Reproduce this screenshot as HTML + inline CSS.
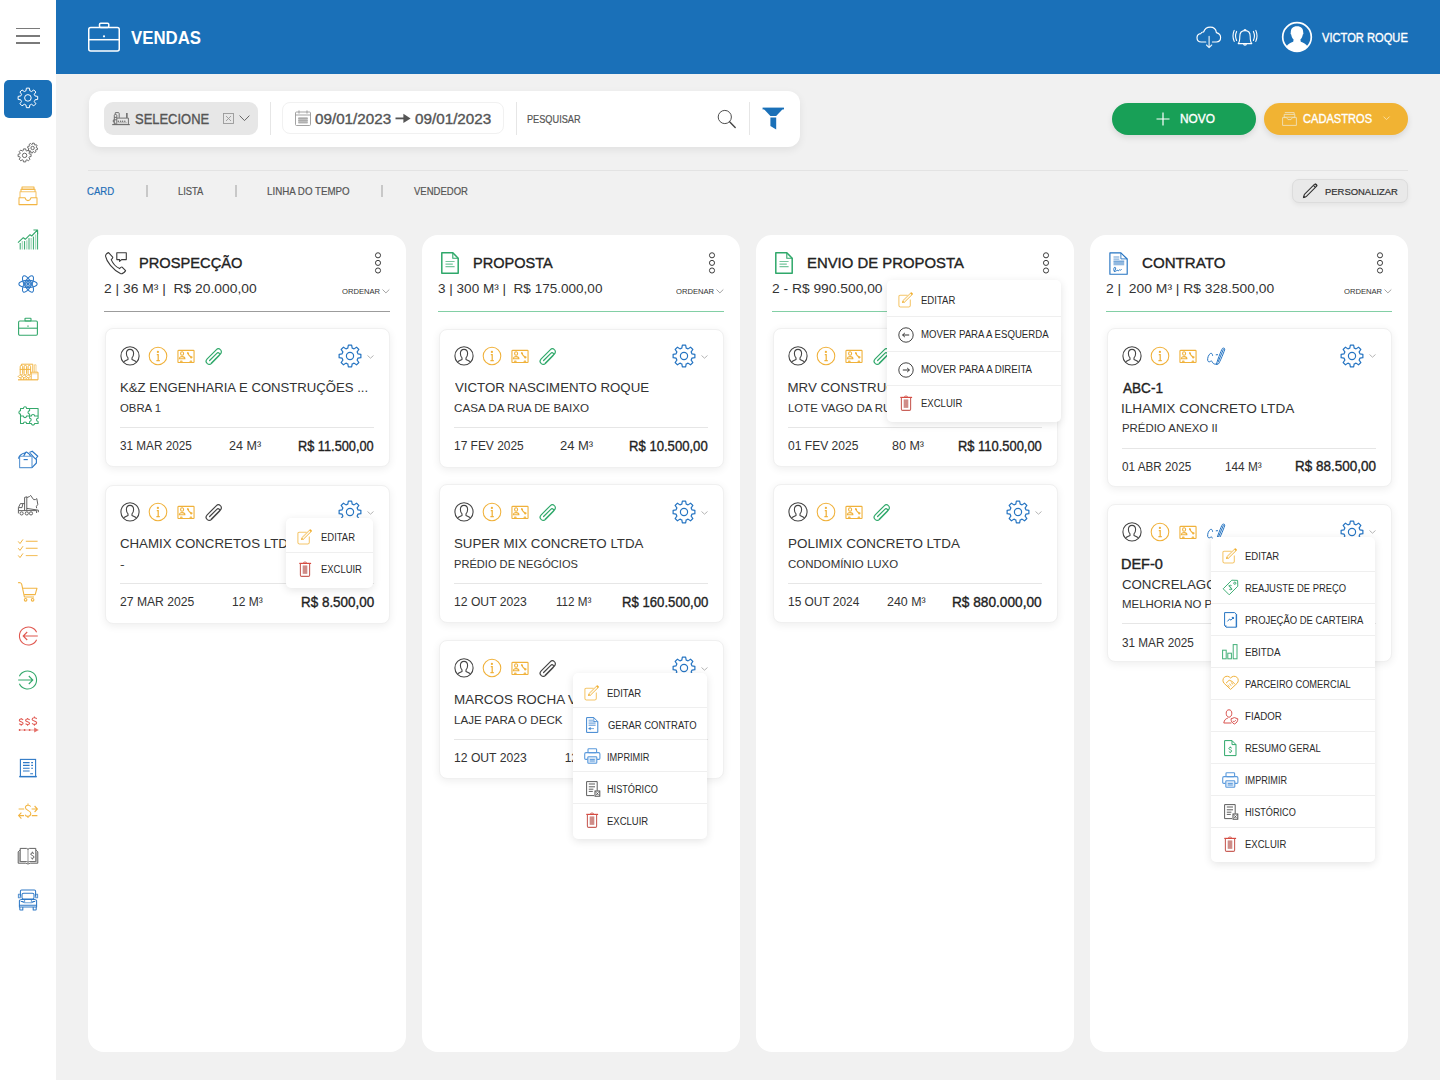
<!DOCTYPE html>
<html><head><meta charset="utf-8">
<style>
*{margin:0;padding:0;box-sizing:border-box}
html,body{width:1440px;height:1080px;overflow:hidden;background:#F1F1F1;font-family:"Liberation Sans",sans-serif}
.a{position:absolute}
.t{position:absolute;line-height:1;white-space:nowrap;transform-origin:0 0}
svg.a{overflow:visible}
</style></head><body>
<div class="a" style="left:0px;top:0px;width:56px;height:1080px;background:#fff;border-radius:0px;"></div>
<div class="a" style="left:16px;top:27.85px;width:24px;height:1.5px;background:#7a7a7a;border-radius:0px;"></div>
<div class="a" style="left:16px;top:35.15px;width:24px;height:1.5px;background:#7a7a7a;border-radius:0px;"></div>
<div class="a" style="left:16px;top:42.25px;width:24px;height:1.5px;background:#7a7a7a;border-radius:0px;"></div>
<div class="a" style="left:4px;top:80px;width:48px;height:38px;background:#1A70B8;border-radius:5px;"></div>
<svg class="a" style="left:16.1px;top:86.3px;" width="23.8" height="23.8" viewBox="0 0 23.8 23.8"><path d="M9.95,4.86 L10.42,2.11 L13.38,2.11 L13.85,4.86 L14.69,5.16 L15.50,5.55 L17.78,3.93 L19.87,6.02 L18.25,8.30 L18.64,9.11 L18.94,9.95 L21.69,10.42 L21.69,13.38 L18.94,13.85 L18.64,14.69 L18.25,15.50 L19.87,17.78 L17.78,19.87 L15.50,18.25 L14.69,18.64 L13.85,18.94 L13.38,21.69 L10.42,21.69 L9.95,18.94 L9.11,18.64 L8.30,18.25 L6.02,19.87 L3.93,17.78 L5.55,15.50 L5.16,14.69 L4.86,13.85 L2.11,13.38 L2.11,10.42 L4.86,9.95 L5.16,9.11 L5.55,8.30 L3.93,6.02 L6.02,3.93 L8.30,5.55 L9.11,5.16Z" fill="none" stroke="#fff" stroke-width="1.0" stroke-linejoin="round"/><circle cx="11.9" cy="11.9" r="3.3" fill="none" stroke="#fff" stroke-width="1.0"/></svg>
<div class="a" style="left:56px;top:0px;width:1384px;height:74px;background:#1A70B8;border-radius:0px;"></div>
<svg class="a" style="left:86px;top:21px;" width="36" height="32" viewBox="0 0 36 32"><g fill="none" stroke="#fff" stroke-width="1.5"><rect x="2.75" y="6.5" width="30.5" height="23.5" rx="2"/><rect x="13.5" y="2.2" width="9.3" height="4.3" rx="1.2"/><line x1="2.75" y1="18.7" x2="33.25" y2="18.7"/></g><circle cx="18" cy="15.3" r="1.1" fill="#fff"/></svg>
<span class="t" style="left:130.69px;top:28.54px;font-size:18.5px;color:#fff;font-weight:700;transform:scaleX(0.9074);">VENDAS</span>
<span class="t" style="left:1321.65px;top:31.63px;font-size:12.6px;color:#fff;font-weight:400;-webkit-text-stroke:0.35px #fff;transform:scaleX(0.8845);">VICTOR ROQUE</span>
<div class="a" style="left:88.5px;top:91px;width:711.5px;height:55.5px;background:#fff;border-radius:12px;box-shadow:0 3px 8px rgba(0,0,0,0.07)"></div>
<div class="a" style="left:104px;top:102px;width:154px;height:33px;background:#E7E7E7;border-radius:9px;"></div>
<span class="t" style="left:135.41px;top:111.90px;font-size:14.3px;color:#555;font-weight:400;-webkit-text-stroke:0.35px #555;transform:scaleX(0.9059);">SELECIONE</span>
<div class="a" style="left:269.5px;top:102px;width:1px;height:33px;background:#E6E6E6;border-radius:0px;"></div>
<div class="a" style="left:282.3px;top:102.3px;width:221.5px;height:32.1px;background:#fff;border-radius:8px;border:1px solid #F1F1F1"></div>
<span class="t" style="left:314.71px;top:112.15px;font-size:14px;color:#555;font-weight:400;-webkit-text-stroke:0.35px #555;transform:scaleX(1.0868);">09/01/2023</span>
<span class="t" style="left:414.90px;top:112.15px;font-size:14px;color:#555;font-weight:400;-webkit-text-stroke:0.35px #555;transform:scaleX(1.0883);">09/01/2023</span>
<div class="a" style="left:515.5px;top:102px;width:1px;height:33px;background:#E6E6E6;border-radius:0px;"></div>
<span class="t" style="left:527.25px;top:113.73px;font-size:10.6px;color:#555;font-weight:400;-webkit-text-stroke:0.2px #555;transform:scaleX(0.8666);">PESQUISAR</span>
<div class="a" style="left:748.5px;top:102px;width:1px;height:33px;background:#E6E6E6;border-radius:0px;"></div>
<div class="a" style="left:1111.6px;top:102.5px;width:144.4px;height:32px;background:#18A057;border-radius:16px;box-shadow:0 3px 6px rgba(0,0,0,0.10)"></div>
<span class="t" style="left:1180.03px;top:113.17px;font-size:12.2px;color:#fff;font-weight:400;-webkit-text-stroke:0.35px #fff;transform:scaleX(0.9736);">NOVO</span>
<div class="a" style="left:1264px;top:102.5px;width:143.8px;height:32px;background:#F1B333;border-radius:16px;box-shadow:0 3px 6px rgba(0,0,0,0.10)"></div>
<span class="t" style="left:1303.44px;top:113.17px;font-size:12.2px;color:#fff;font-weight:400;-webkit-text-stroke:0.35px #fff;transform:scaleX(0.9106);">CADASTROS</span>
<div class="a" style="left:88px;top:170px;width:1320px;height:1px;background:#E3E3E3;border-radius:0px;"></div>
<span class="t" style="left:87.31px;top:186.02px;font-size:11.2px;color:#1F6FB8;font-weight:400;-webkit-text-stroke:0.2px #1F6FB8;transform:scaleX(0.8563);">CARD</span>
<span class="t" style="left:178.23px;top:186.02px;font-size:11.2px;color:#555;font-weight:400;-webkit-text-stroke:0.2px #555;transform:scaleX(0.8389);">LISTA</span>
<span class="t" style="left:267.20px;top:186.02px;font-size:11.2px;color:#555;font-weight:400;-webkit-text-stroke:0.2px #555;transform:scaleX(0.8709);">LINHA DO TEMPO</span>
<span class="t" style="left:413.96px;top:186.02px;font-size:11.2px;color:#555;font-weight:400;-webkit-text-stroke:0.2px #555;transform:scaleX(0.8514);">VENDEDOR</span>
<div class="a" style="left:146.25px;top:185px;width:1.5px;height:12px;background:#C8C8C8;border-radius:0px;"></div>
<div class="a" style="left:235.25px;top:185px;width:1.5px;height:12px;background:#C8C8C8;border-radius:0px;"></div>
<div class="a" style="left:381.25px;top:185px;width:1.5px;height:12px;background:#C8C8C8;border-radius:0px;"></div>
<div class="a" style="left:1292px;top:179px;width:115.5px;height:23.5px;background:#E9E9E9;border-radius:7px;border:1px solid #DCDCDC;box-shadow:0 2px 5px rgba(0,0,0,0.06)"></div>
<span class="t" style="left:1325.23px;top:186.67px;font-size:9.6px;color:#333;font-weight:400;-webkit-text-stroke:0.2px #333;transform:scaleX(0.9839);">PERSONALIZAR</span>
<div class="a" style="left:88px;top:235px;width:318px;height:817px;background:#fff;border-radius:16px;"></div>
<div class="a" style="left:422px;top:235px;width:318px;height:817px;background:#fff;border-radius:16px;"></div>
<div class="a" style="left:756px;top:235px;width:318px;height:817px;background:#fff;border-radius:16px;"></div>
<div class="a" style="left:1090px;top:235px;width:318px;height:817px;background:#fff;border-radius:16px;"></div>
<svg class="a" style="left:104px;top:251px;" width="24" height="24" viewBox="0 0 24 24"><g fill="none" stroke="#3a3a3a" stroke-width="1.1" stroke-linejoin="round"><path d="M4.6,1.6 C3.3,1.9 1.3,3.6 1.6,5.4 C2.6,10.6 8.6,18.6 16.4,22.6 C18.2,23.3 20.6,21.3 21.6,19.6 L18.1,16.1 C17.4,15.6 16.4,16.6 15.6,17.6 C11.6,15.8 8.6,11.8 7.2,8.6 C8.1,7.8 9.2,7.0 8.7,6.2 Z"/><path d="M12.8,1.7 H22.3 V8.6 H17.6 L15.6,10.3 L15.6,8.6 H12.8 Z"/></g></svg>
<span class="t" style="left:139.30px;top:255.38px;font-size:15.5px;color:#222;font-weight:400;-webkit-text-stroke:0.35px #222;transform:scaleX(0.9453);">PROSPECÇÃO</span>
<span class="t" style="left:103.60px;top:281.64px;font-size:13.3px;color:#333;font-weight:400;transform:scaleX(1.0410);">2 | 36 M³ |&nbsp; R$ 20.000,00</span>
<span class="t" style="left:341.64px;top:288.03px;font-size:8.0px;color:#333;font-weight:400;transform:scaleX(0.9525);">ORDENAR</span>
<svg class="a" style="left:382px;top:289.2px;" width="8" height="5" viewBox="0 0 8 5"><path d="M0.5,0.5 L3.9,3.9 L7.3,0.5" fill="none" stroke="#999" stroke-width="0.9"/></svg>
<svg class="a" style="left:374px;top:251.6px;" width="8" height="23" viewBox="0 0 8 23"><circle cx="4" cy="3.3" r="2.55" fill="none" stroke="#333" stroke-width="0.95"/><circle cx="4" cy="10.899999999999999" r="2.55" fill="none" stroke="#333" stroke-width="0.95"/><circle cx="4" cy="18.5" r="2.55" fill="none" stroke="#333" stroke-width="0.95"/></svg>
<div class="a" style="left:104px;top:310.7px;width:286px;height:1.2px;background:#9c9c9c;border-radius:0px;"></div>
<svg class="a" style="left:441px;top:252px;" width="18" height="22" viewBox="0 0 18 22"><path d="M0.8,0.8 H11.8 L17.2,6.2 V21.2 H0.8 Z" fill="none" stroke="#2FA86A" stroke-width="1.5" stroke-linejoin="round"/><path d="M11.8,0.8 V6.2 H17.2" fill="none" stroke="#2FA86A" stroke-width="1.1"/><path d="M4.5,9.5 H13.6 M4.5,12.1 H11.8 M4.5,14.7 H13.6" stroke="#2FA86A" stroke-width="1.2" opacity="0.65"/></svg>
<span class="t" style="left:473.31px;top:255.38px;font-size:15.5px;color:#222;font-weight:400;-webkit-text-stroke:0.35px #222;transform:scaleX(0.9381);">PROPOSTA</span>
<span class="t" style="left:437.78px;top:281.64px;font-size:13.3px;color:#333;font-weight:400;transform:scaleX(1.0188);">3 | 300 M³ |&nbsp; R$ 175.000,00</span>
<span class="t" style="left:675.64px;top:288.03px;font-size:8.0px;color:#333;font-weight:400;transform:scaleX(0.9525);">ORDENAR</span>
<svg class="a" style="left:716px;top:289.2px;" width="8" height="5" viewBox="0 0 8 5"><path d="M0.5,0.5 L3.9,3.9 L7.3,0.5" fill="none" stroke="#999" stroke-width="0.9"/></svg>
<svg class="a" style="left:708px;top:251.6px;" width="8" height="23" viewBox="0 0 8 23"><circle cx="4" cy="3.3" r="2.55" fill="none" stroke="#333" stroke-width="0.95"/><circle cx="4" cy="10.899999999999999" r="2.55" fill="none" stroke="#333" stroke-width="0.95"/><circle cx="4" cy="18.5" r="2.55" fill="none" stroke="#333" stroke-width="0.95"/></svg>
<div class="a" style="left:438px;top:310.7px;width:286px;height:1.2px;background:#82CFA5;border-radius:0px;"></div>
<svg class="a" style="left:775px;top:252px;" width="18" height="22" viewBox="0 0 18 22"><path d="M0.8,0.8 H11.8 L17.2,6.2 V21.2 H0.8 Z" fill="none" stroke="#2FA86A" stroke-width="1.5" stroke-linejoin="round"/><path d="M11.8,0.8 V6.2 H17.2" fill="none" stroke="#2FA86A" stroke-width="1.1"/><path d="M4.5,9.5 H13.6 M4.5,12.1 H11.8 M4.5,14.7 H13.6" stroke="#2FA86A" stroke-width="1.2" opacity="0.65"/></svg>
<span class="t" style="left:807.28px;top:255.38px;font-size:15.5px;color:#222;font-weight:400;-webkit-text-stroke:0.35px #222;transform:scaleX(0.9602);">ENVIO DE PROPOSTA</span>
<span class="t" style="left:771.61px;top:281.64px;font-size:13.3px;color:#333;font-weight:400;transform:scaleX(1.0383);">2 - R$ 990.500,00</span>
<span class="t" style="left:1009.64px;top:288.03px;font-size:8.0px;color:#333;font-weight:400;transform:scaleX(0.9525);">ORDENAR</span>
<svg class="a" style="left:1050px;top:289.2px;" width="8" height="5" viewBox="0 0 8 5"><path d="M0.5,0.5 L3.9,3.9 L7.3,0.5" fill="none" stroke="#999" stroke-width="0.9"/></svg>
<svg class="a" style="left:1042px;top:251.6px;" width="8" height="23" viewBox="0 0 8 23"><circle cx="4" cy="3.3" r="2.55" fill="none" stroke="#333" stroke-width="0.95"/><circle cx="4" cy="10.899999999999999" r="2.55" fill="none" stroke="#333" stroke-width="0.95"/><circle cx="4" cy="18.5" r="2.55" fill="none" stroke="#333" stroke-width="0.95"/></svg>
<div class="a" style="left:772px;top:310.7px;width:286px;height:1.2px;background:#82CFA5;border-radius:0px;"></div>
<svg class="a" style="left:1108.5px;top:251.5px;" width="20" height="23" viewBox="0 0 20 23"><path d="M0.9,0.9 H11.9 L18.2,7.0 V22.2 H0.9 Z" fill="none" stroke="#2574C2" stroke-width="1.15" stroke-linejoin="round"/><path d="M11.9,0.9 V6.9 H18.2" fill="none" stroke="#2574C2" stroke-width="0.9"/><path d="M4.5,5 H10.3 M4.5,7.1 H10.3" stroke="#2574C2" stroke-width="0.95" opacity="0.75"/><rect x="4.5" y="8.6" width="10.7" height="4.7" fill="#2574C2" opacity="0.5"/><rect x="4.5" y="8.6" width="10.7" height="1.1" fill="#2574C2" opacity="0.35"/><path d="M5.2,19.4 C4.4,17.2 4.9,15 6.1,15.2 C7.3,15.5 6.6,18.8 5.1,19.4 C6,19.9 7.4,18.9 8.1,18.1 L9.3,18.9 L10.5,17.7 L11.5,18.3 L12.6,17.2" fill="none" stroke="#2574C2" stroke-width="0.95"/></svg>
<span class="t" style="left:1141.73px;top:255.38px;font-size:15.5px;color:#222;font-weight:400;-webkit-text-stroke:0.35px #222;transform:scaleX(0.9760);">CONTRATO</span>
<span class="t" style="left:1105.60px;top:281.64px;font-size:13.3px;color:#333;font-weight:400;transform:scaleX(1.0423);">2 |&nbsp; 200 M³ | R$ 328.500,00</span>
<span class="t" style="left:1343.64px;top:288.03px;font-size:8.0px;color:#333;font-weight:400;transform:scaleX(0.9525);">ORDENAR</span>
<svg class="a" style="left:1384px;top:289.2px;" width="8" height="5" viewBox="0 0 8 5"><path d="M0.5,0.5 L3.9,3.9 L7.3,0.5" fill="none" stroke="#999" stroke-width="0.9"/></svg>
<svg class="a" style="left:1376px;top:251.6px;" width="8" height="23" viewBox="0 0 8 23"><circle cx="4" cy="3.3" r="2.55" fill="none" stroke="#333" stroke-width="0.95"/><circle cx="4" cy="10.899999999999999" r="2.55" fill="none" stroke="#333" stroke-width="0.95"/><circle cx="4" cy="18.5" r="2.55" fill="none" stroke="#333" stroke-width="0.95"/></svg>
<div class="a" style="left:1106px;top:310.7px;width:286px;height:1.2px;background:#82CFA5;border-radius:0px;"></div>
<div class="a" style="left:104.5px;top:328.4px;width:285px;height:139px;background:#fff;border-radius:8px;box-shadow:0 2px 9px rgba(0,0,0,0.07);border:1px solid #F0F0F0"></div>
<svg class="a" style="left:119px;top:345.0px;" width="22" height="22" viewBox="0 0 22 22"><g fill="none" stroke="#454545" stroke-width="1.1"><circle cx="11" cy="10.9" r="9.1"/><path d="M4.6,17.0 C5.8,15.6 7.6,15.1 9.0,14.4 L9.0,12.9 C8.0,12.0 7.4,10.6 7.4,8.6 C7.4,5.9 8.8,4.4 11,4.4 C13.2,4.4 14.6,5.9 14.6,8.6 C14.6,10.6 14.0,12.0 13.0,12.9 L13.0,14.4 C14.4,15.1 16.2,15.6 17.4,17.0"/></g></svg>
<svg class="a" style="left:148px;top:346.0px;" width="20" height="20" viewBox="0 0 20 20"><circle cx="10" cy="10" r="8.8" fill="none" stroke="#F0B13A" stroke-width="1.05"/><circle cx="9.9" cy="5.9" r="1.15" fill="#F0B13A"/><path d="M8.8,8.7 H10.2 V14.6 M8.4,14.7 H11.8" fill="none" stroke="#F0B13A" stroke-width="1.25"/></svg>
<svg class="a" style="left:177px;top:349.0px;" width="18" height="15" viewBox="0 0 18 15"><g fill="none" stroke="#F0B13A" stroke-width="1.1" stroke-linejoin="round"><rect x="0.95" y="1.35" width="16.1" height="12.2" rx="0.6"/><ellipse cx="5.1" cy="4.5" rx="1.5" ry="1.75"/><path d="M2.3,9.8 C2.3,8.2 3.6,7.6 5.1,7.6 C6.6,7.6 7.9,8.2 7.9,9.8 Z"/><path d="M10.9,4.4 C11.6,6.2 12.8,7.6 14.4,8.4" stroke-width="1.2"/></g><ellipse cx="11" cy="4.3" rx="0.9" ry="1.3" transform="rotate(-30 11 4.3)" fill="#F0B13A"/><ellipse cx="14.4" cy="8.4" rx="1.3" ry="0.9" transform="rotate(-30 14.4 8.4)" fill="#F0B13A"/><path d="M2.6,13.6 L3.4,11.6 H5.2 L6,13.6 Z M12.2,13.6 L13,11.6 H14.8 L15.6,13.6 Z" fill="#F0B13A" opacity="0.85"/></svg>
<svg class="a" style="left:204.5px;top:347.8px;" width="18" height="17" viewBox="0 0 18 17"><path d="M6.2,15.2 L15.4,6.0 C16.7,4.7 16.7,2.7 15.4,1.6 C14.2,0.5 12.4,0.6 11.2,1.8 L2.2,10.8 C0.9,12.1 0.9,14.2 2.1,15.4 C3.4,16.6 5.3,16.6 6.6,15.3 L14.2,7.7 C14.9,7.0 14.9,5.9 14.2,5.2 C13.5,4.6 12.5,4.6 11.8,5.3 L4.6,12.5" fill="none" stroke="#2FA86A" stroke-width="1.2" stroke-linecap="round"/></svg>
<svg class="a" style="left:337px;top:343.0px;" width="26" height="26" viewBox="0 0 26 26"><path d="M10.81,5.10 L11.36,2.12 L14.64,2.12 L15.19,5.10 L16.14,5.42 L17.04,5.87 L19.53,4.15 L21.85,6.47 L20.13,8.96 L20.58,9.86 L20.90,10.81 L23.88,11.36 L23.88,14.64 L20.90,15.19 L20.58,16.14 L20.13,17.04 L21.85,19.53 L19.53,21.85 L17.04,20.13 L16.14,20.58 L15.19,20.90 L14.64,23.88 L11.36,23.88 L10.81,20.90 L9.86,20.58 L8.96,20.13 L6.47,21.85 L4.15,19.53 L5.87,17.04 L5.42,16.14 L5.10,15.19 L2.12,14.64 L2.12,11.36 L5.10,10.81 L5.42,9.86 L5.87,8.96 L4.15,6.47 L6.47,4.15 L8.96,5.87 L9.86,5.42Z" fill="none" stroke="#2574C2" stroke-width="1.2" stroke-linejoin="round"/><circle cx="13" cy="13" r="3.6" fill="none" stroke="#2574C2" stroke-width="1.2"/></svg>
<svg class="a" style="left:367px;top:354.5px;" width="7" height="4" viewBox="0 0 7 4"><path d="M0.5,0.5 L3.5,3.2 L6.5,0.5" fill="none" stroke="#b5b5b5" stroke-width="1"/></svg>
<span class="t" style="left:119.52px;top:381.24px;font-size:13.3px;color:#333;font-weight:400;transform:scaleX(0.9879);">K&amp;Z ENGENHARIA E CONSTRUÇÕES ...</span>
<span class="t" style="left:120.06px;top:402.57px;font-size:10.9px;color:#333;font-weight:400;transform:scaleX(1.0415);">OBRA 1</span>
<div class="a" style="left:120px;top:427.0px;width:254px;height:1px;background:#E6E6E6;border-radius:0px;"></div>
<span class="t" style="left:120.35px;top:440.24px;font-size:12px;color:#333;font-weight:400;transform:scaleX(0.9789);">31 MAR 2025</span>
<span class="t" style="left:228.97px;top:440.24px;font-size:12px;color:#333;font-weight:400;transform:scaleX(1.0452);">24 M³</span>
<span class="t" style="left:298.35px;top:438.73px;font-size:14.5px;color:#222;font-weight:400;-webkit-text-stroke:0.35px #222;transform:scaleX(0.8796);">R$ 11.500,00</span>
<div class="a" style="left:104.5px;top:484.5px;width:285px;height:139px;background:#fff;border-radius:8px;box-shadow:0 2px 9px rgba(0,0,0,0.07);border:1px solid #F0F0F0"></div>
<svg class="a" style="left:119px;top:501.1px;" width="22" height="22" viewBox="0 0 22 22"><g fill="none" stroke="#454545" stroke-width="1.1"><circle cx="11" cy="10.9" r="9.1"/><path d="M4.6,17.0 C5.8,15.6 7.6,15.1 9.0,14.4 L9.0,12.9 C8.0,12.0 7.4,10.6 7.4,8.6 C7.4,5.9 8.8,4.4 11,4.4 C13.2,4.4 14.6,5.9 14.6,8.6 C14.6,10.6 14.0,12.0 13.0,12.9 L13.0,14.4 C14.4,15.1 16.2,15.6 17.4,17.0"/></g></svg>
<svg class="a" style="left:148px;top:502.1px;" width="20" height="20" viewBox="0 0 20 20"><circle cx="10" cy="10" r="8.8" fill="none" stroke="#F0B13A" stroke-width="1.05"/><circle cx="9.9" cy="5.9" r="1.15" fill="#F0B13A"/><path d="M8.8,8.7 H10.2 V14.6 M8.4,14.7 H11.8" fill="none" stroke="#F0B13A" stroke-width="1.25"/></svg>
<svg class="a" style="left:177px;top:505.1px;" width="18" height="15" viewBox="0 0 18 15"><g fill="none" stroke="#F0B13A" stroke-width="1.1" stroke-linejoin="round"><rect x="0.95" y="1.35" width="16.1" height="12.2" rx="0.6"/><ellipse cx="5.1" cy="4.5" rx="1.5" ry="1.75"/><path d="M2.3,9.8 C2.3,8.2 3.6,7.6 5.1,7.6 C6.6,7.6 7.9,8.2 7.9,9.8 Z"/><path d="M10.9,4.4 C11.6,6.2 12.8,7.6 14.4,8.4" stroke-width="1.2"/></g><ellipse cx="11" cy="4.3" rx="0.9" ry="1.3" transform="rotate(-30 11 4.3)" fill="#F0B13A"/><ellipse cx="14.4" cy="8.4" rx="1.3" ry="0.9" transform="rotate(-30 14.4 8.4)" fill="#F0B13A"/><path d="M2.6,13.6 L3.4,11.6 H5.2 L6,13.6 Z M12.2,13.6 L13,11.6 H14.8 L15.6,13.6 Z" fill="#F0B13A" opacity="0.85"/></svg>
<svg class="a" style="left:204.5px;top:503.90000000000003px;" width="18" height="17" viewBox="0 0 18 17"><path d="M6.2,15.2 L15.4,6.0 C16.7,4.7 16.7,2.7 15.4,1.6 C14.2,0.5 12.4,0.6 11.2,1.8 L2.2,10.8 C0.9,12.1 0.9,14.2 2.1,15.4 C3.4,16.6 5.3,16.6 6.6,15.3 L14.2,7.7 C14.9,7.0 14.9,5.9 14.2,5.2 C13.5,4.6 12.5,4.6 11.8,5.3 L4.6,12.5" fill="none" stroke="#444" stroke-width="1.2" stroke-linecap="round"/></svg>
<svg class="a" style="left:337px;top:499.1px;" width="26" height="26" viewBox="0 0 26 26"><path d="M10.81,5.10 L11.36,2.12 L14.64,2.12 L15.19,5.10 L16.14,5.42 L17.04,5.87 L19.53,4.15 L21.85,6.47 L20.13,8.96 L20.58,9.86 L20.90,10.81 L23.88,11.36 L23.88,14.64 L20.90,15.19 L20.58,16.14 L20.13,17.04 L21.85,19.53 L19.53,21.85 L17.04,20.13 L16.14,20.58 L15.19,20.90 L14.64,23.88 L11.36,23.88 L10.81,20.90 L9.86,20.58 L8.96,20.13 L6.47,21.85 L4.15,19.53 L5.87,17.04 L5.42,16.14 L5.10,15.19 L2.12,14.64 L2.12,11.36 L5.10,10.81 L5.42,9.86 L5.87,8.96 L4.15,6.47 L6.47,4.15 L8.96,5.87 L9.86,5.42Z" fill="none" stroke="#2574C2" stroke-width="1.2" stroke-linejoin="round"/><circle cx="13" cy="13" r="3.6" fill="none" stroke="#2574C2" stroke-width="1.2"/></svg>
<svg class="a" style="left:367px;top:510.6px;" width="7" height="4" viewBox="0 0 7 4"><path d="M0.5,0.5 L3.5,3.2 L6.5,0.5" fill="none" stroke="#b5b5b5" stroke-width="1"/></svg>
<span class="t" style="left:119.92px;top:537.34px;font-size:13.3px;color:#333;font-weight:400;">CHAMIX CONCRETOS LTDA</span>
<span class="t" style="left:119.98px;top:558.67px;font-size:10.9px;color:#333;font-weight:400;transform:scaleX(1.2725);">-</span>
<div class="a" style="left:120px;top:583.1px;width:254px;height:1px;background:#E6E6E6;border-radius:0px;"></div>
<span class="t" style="left:120.19px;top:596.34px;font-size:12px;color:#333;font-weight:400;transform:scaleX(1.0127);">27 MAR 2025</span>
<span class="t" style="left:232.09px;top:596.34px;font-size:12px;color:#333;font-weight:400;">12 M³</span>
<span class="t" style="left:300.80px;top:594.83px;font-size:14.5px;color:#222;font-weight:400;-webkit-text-stroke:0.35px #222;transform:scaleX(0.9267);">R$ 8.500,00</span>
<div class="a" style="left:438.5px;top:328.6px;width:285px;height:139px;background:#fff;border-radius:8px;box-shadow:0 2px 9px rgba(0,0,0,0.07);border:1px solid #F0F0F0"></div>
<svg class="a" style="left:453px;top:345.20000000000005px;" width="22" height="22" viewBox="0 0 22 22"><g fill="none" stroke="#454545" stroke-width="1.1"><circle cx="11" cy="10.9" r="9.1"/><path d="M4.6,17.0 C5.8,15.6 7.6,15.1 9.0,14.4 L9.0,12.9 C8.0,12.0 7.4,10.6 7.4,8.6 C7.4,5.9 8.8,4.4 11,4.4 C13.2,4.4 14.6,5.9 14.6,8.6 C14.6,10.6 14.0,12.0 13.0,12.9 L13.0,14.4 C14.4,15.1 16.2,15.6 17.4,17.0"/></g></svg>
<svg class="a" style="left:482px;top:346.20000000000005px;" width="20" height="20" viewBox="0 0 20 20"><circle cx="10" cy="10" r="8.8" fill="none" stroke="#F0B13A" stroke-width="1.05"/><circle cx="9.9" cy="5.9" r="1.15" fill="#F0B13A"/><path d="M8.8,8.7 H10.2 V14.6 M8.4,14.7 H11.8" fill="none" stroke="#F0B13A" stroke-width="1.25"/></svg>
<svg class="a" style="left:511px;top:349.20000000000005px;" width="18" height="15" viewBox="0 0 18 15"><g fill="none" stroke="#F0B13A" stroke-width="1.1" stroke-linejoin="round"><rect x="0.95" y="1.35" width="16.1" height="12.2" rx="0.6"/><ellipse cx="5.1" cy="4.5" rx="1.5" ry="1.75"/><path d="M2.3,9.8 C2.3,8.2 3.6,7.6 5.1,7.6 C6.6,7.6 7.9,8.2 7.9,9.8 Z"/><path d="M10.9,4.4 C11.6,6.2 12.8,7.6 14.4,8.4" stroke-width="1.2"/></g><ellipse cx="11" cy="4.3" rx="0.9" ry="1.3" transform="rotate(-30 11 4.3)" fill="#F0B13A"/><ellipse cx="14.4" cy="8.4" rx="1.3" ry="0.9" transform="rotate(-30 14.4 8.4)" fill="#F0B13A"/><path d="M2.6,13.6 L3.4,11.6 H5.2 L6,13.6 Z M12.2,13.6 L13,11.6 H14.8 L15.6,13.6 Z" fill="#F0B13A" opacity="0.85"/></svg>
<svg class="a" style="left:538.5px;top:348.00000000000006px;" width="18" height="17" viewBox="0 0 18 17"><path d="M6.2,15.2 L15.4,6.0 C16.7,4.7 16.7,2.7 15.4,1.6 C14.2,0.5 12.4,0.6 11.2,1.8 L2.2,10.8 C0.9,12.1 0.9,14.2 2.1,15.4 C3.4,16.6 5.3,16.6 6.6,15.3 L14.2,7.7 C14.9,7.0 14.9,5.9 14.2,5.2 C13.5,4.6 12.5,4.6 11.8,5.3 L4.6,12.5" fill="none" stroke="#2FA86A" stroke-width="1.2" stroke-linecap="round"/></svg>
<svg class="a" style="left:671px;top:343.20000000000005px;" width="26" height="26" viewBox="0 0 26 26"><path d="M10.81,5.10 L11.36,2.12 L14.64,2.12 L15.19,5.10 L16.14,5.42 L17.04,5.87 L19.53,4.15 L21.85,6.47 L20.13,8.96 L20.58,9.86 L20.90,10.81 L23.88,11.36 L23.88,14.64 L20.90,15.19 L20.58,16.14 L20.13,17.04 L21.85,19.53 L19.53,21.85 L17.04,20.13 L16.14,20.58 L15.19,20.90 L14.64,23.88 L11.36,23.88 L10.81,20.90 L9.86,20.58 L8.96,20.13 L6.47,21.85 L4.15,19.53 L5.87,17.04 L5.42,16.14 L5.10,15.19 L2.12,14.64 L2.12,11.36 L5.10,10.81 L5.42,9.86 L5.87,8.96 L4.15,6.47 L6.47,4.15 L8.96,5.87 L9.86,5.42Z" fill="none" stroke="#2574C2" stroke-width="1.2" stroke-linejoin="round"/><circle cx="13" cy="13" r="3.6" fill="none" stroke="#2574C2" stroke-width="1.2"/></svg>
<svg class="a" style="left:701px;top:354.70000000000005px;" width="7" height="4" viewBox="0 0 7 4"><path d="M0.5,0.5 L3.5,3.2 L6.5,0.5" fill="none" stroke="#b5b5b5" stroke-width="1"/></svg>
<span class="t" style="left:454.54px;top:381.44px;font-size:13.3px;color:#333;font-weight:400;transform:scaleX(0.9978);">VICTOR NASCIMENTO ROQUE</span>
<span class="t" style="left:454.01px;top:402.77px;font-size:10.9px;color:#333;font-weight:400;transform:scaleX(1.0676);">CASA DA RUA DE BAIXO</span>
<div class="a" style="left:454px;top:427.20000000000005px;width:254px;height:1px;background:#E6E6E6;border-radius:0px;"></div>
<span class="t" style="left:453.89px;top:440.44px;font-size:12px;color:#333;font-weight:400;transform:scaleX(0.9950);">17 FEV 2025</span>
<span class="t" style="left:559.75px;top:440.44px;font-size:12px;color:#333;font-weight:400;transform:scaleX(1.0821);">24 M³</span>
<span class="t" style="left:629.33px;top:438.93px;font-size:14.5px;color:#222;font-weight:400;-webkit-text-stroke:0.35px #222;transform:scaleX(0.9036);">R$ 10.500,00</span>
<div class="a" style="left:438.5px;top:484.4px;width:285px;height:139px;background:#fff;border-radius:8px;box-shadow:0 2px 9px rgba(0,0,0,0.07);border:1px solid #F0F0F0"></div>
<svg class="a" style="left:453px;top:501.0px;" width="22" height="22" viewBox="0 0 22 22"><g fill="none" stroke="#454545" stroke-width="1.1"><circle cx="11" cy="10.9" r="9.1"/><path d="M4.6,17.0 C5.8,15.6 7.6,15.1 9.0,14.4 L9.0,12.9 C8.0,12.0 7.4,10.6 7.4,8.6 C7.4,5.9 8.8,4.4 11,4.4 C13.2,4.4 14.6,5.9 14.6,8.6 C14.6,10.6 14.0,12.0 13.0,12.9 L13.0,14.4 C14.4,15.1 16.2,15.6 17.4,17.0"/></g></svg>
<svg class="a" style="left:482px;top:502.0px;" width="20" height="20" viewBox="0 0 20 20"><circle cx="10" cy="10" r="8.8" fill="none" stroke="#F0B13A" stroke-width="1.05"/><circle cx="9.9" cy="5.9" r="1.15" fill="#F0B13A"/><path d="M8.8,8.7 H10.2 V14.6 M8.4,14.7 H11.8" fill="none" stroke="#F0B13A" stroke-width="1.25"/></svg>
<svg class="a" style="left:511px;top:505.0px;" width="18" height="15" viewBox="0 0 18 15"><g fill="none" stroke="#F0B13A" stroke-width="1.1" stroke-linejoin="round"><rect x="0.95" y="1.35" width="16.1" height="12.2" rx="0.6"/><ellipse cx="5.1" cy="4.5" rx="1.5" ry="1.75"/><path d="M2.3,9.8 C2.3,8.2 3.6,7.6 5.1,7.6 C6.6,7.6 7.9,8.2 7.9,9.8 Z"/><path d="M10.9,4.4 C11.6,6.2 12.8,7.6 14.4,8.4" stroke-width="1.2"/></g><ellipse cx="11" cy="4.3" rx="0.9" ry="1.3" transform="rotate(-30 11 4.3)" fill="#F0B13A"/><ellipse cx="14.4" cy="8.4" rx="1.3" ry="0.9" transform="rotate(-30 14.4 8.4)" fill="#F0B13A"/><path d="M2.6,13.6 L3.4,11.6 H5.2 L6,13.6 Z M12.2,13.6 L13,11.6 H14.8 L15.6,13.6 Z" fill="#F0B13A" opacity="0.85"/></svg>
<svg class="a" style="left:538.5px;top:503.8px;" width="18" height="17" viewBox="0 0 18 17"><path d="M6.2,15.2 L15.4,6.0 C16.7,4.7 16.7,2.7 15.4,1.6 C14.2,0.5 12.4,0.6 11.2,1.8 L2.2,10.8 C0.9,12.1 0.9,14.2 2.1,15.4 C3.4,16.6 5.3,16.6 6.6,15.3 L14.2,7.7 C14.9,7.0 14.9,5.9 14.2,5.2 C13.5,4.6 12.5,4.6 11.8,5.3 L4.6,12.5" fill="none" stroke="#2FA86A" stroke-width="1.2" stroke-linecap="round"/></svg>
<svg class="a" style="left:671px;top:499.0px;" width="26" height="26" viewBox="0 0 26 26"><path d="M10.81,5.10 L11.36,2.12 L14.64,2.12 L15.19,5.10 L16.14,5.42 L17.04,5.87 L19.53,4.15 L21.85,6.47 L20.13,8.96 L20.58,9.86 L20.90,10.81 L23.88,11.36 L23.88,14.64 L20.90,15.19 L20.58,16.14 L20.13,17.04 L21.85,19.53 L19.53,21.85 L17.04,20.13 L16.14,20.58 L15.19,20.90 L14.64,23.88 L11.36,23.88 L10.81,20.90 L9.86,20.58 L8.96,20.13 L6.47,21.85 L4.15,19.53 L5.87,17.04 L5.42,16.14 L5.10,15.19 L2.12,14.64 L2.12,11.36 L5.10,10.81 L5.42,9.86 L5.87,8.96 L4.15,6.47 L6.47,4.15 L8.96,5.87 L9.86,5.42Z" fill="none" stroke="#2574C2" stroke-width="1.2" stroke-linejoin="round"/><circle cx="13" cy="13" r="3.6" fill="none" stroke="#2574C2" stroke-width="1.2"/></svg>
<svg class="a" style="left:701px;top:510.5px;" width="7" height="4" viewBox="0 0 7 4"><path d="M0.5,0.5 L3.5,3.2 L6.5,0.5" fill="none" stroke="#b5b5b5" stroke-width="1"/></svg>
<span class="t" style="left:454.00px;top:537.24px;font-size:13.3px;color:#333;font-weight:400;">SUPER MIX CONCRETO LTDA</span>
<span class="t" style="left:453.69px;top:558.57px;font-size:10.9px;color:#333;font-weight:400;transform:scaleX(1.0187);">PRÉDIO DE NEGÓCIOS</span>
<div class="a" style="left:454px;top:583.0px;width:254px;height:1px;background:#E6E6E6;border-radius:0px;"></div>
<span class="t" style="left:453.87px;top:596.24px;font-size:12px;color:#333;font-weight:400;transform:scaleX(1.0130);">12 OUT 2023</span>
<span class="t" style="left:555.71px;top:596.24px;font-size:12px;color:#333;font-weight:400;transform:scaleX(0.9683);">112 M³</span>
<span class="t" style="left:621.72px;top:594.73px;font-size:14.5px;color:#222;font-weight:400;-webkit-text-stroke:0.35px #222;transform:scaleX(0.9070);">R$ 160.500,00</span>
<div class="a" style="left:438.5px;top:640.4px;width:285px;height:139px;background:#fff;border-radius:8px;box-shadow:0 2px 9px rgba(0,0,0,0.07);border:1px solid #F0F0F0"></div>
<svg class="a" style="left:453px;top:657.0px;" width="22" height="22" viewBox="0 0 22 22"><g fill="none" stroke="#454545" stroke-width="1.1"><circle cx="11" cy="10.9" r="9.1"/><path d="M4.6,17.0 C5.8,15.6 7.6,15.1 9.0,14.4 L9.0,12.9 C8.0,12.0 7.4,10.6 7.4,8.6 C7.4,5.9 8.8,4.4 11,4.4 C13.2,4.4 14.6,5.9 14.6,8.6 C14.6,10.6 14.0,12.0 13.0,12.9 L13.0,14.4 C14.4,15.1 16.2,15.6 17.4,17.0"/></g></svg>
<svg class="a" style="left:482px;top:658.0px;" width="20" height="20" viewBox="0 0 20 20"><circle cx="10" cy="10" r="8.8" fill="none" stroke="#F0B13A" stroke-width="1.05"/><circle cx="9.9" cy="5.9" r="1.15" fill="#F0B13A"/><path d="M8.8,8.7 H10.2 V14.6 M8.4,14.7 H11.8" fill="none" stroke="#F0B13A" stroke-width="1.25"/></svg>
<svg class="a" style="left:511px;top:661.0px;" width="18" height="15" viewBox="0 0 18 15"><g fill="none" stroke="#F0B13A" stroke-width="1.1" stroke-linejoin="round"><rect x="0.95" y="1.35" width="16.1" height="12.2" rx="0.6"/><ellipse cx="5.1" cy="4.5" rx="1.5" ry="1.75"/><path d="M2.3,9.8 C2.3,8.2 3.6,7.6 5.1,7.6 C6.6,7.6 7.9,8.2 7.9,9.8 Z"/><path d="M10.9,4.4 C11.6,6.2 12.8,7.6 14.4,8.4" stroke-width="1.2"/></g><ellipse cx="11" cy="4.3" rx="0.9" ry="1.3" transform="rotate(-30 11 4.3)" fill="#F0B13A"/><ellipse cx="14.4" cy="8.4" rx="1.3" ry="0.9" transform="rotate(-30 14.4 8.4)" fill="#F0B13A"/><path d="M2.6,13.6 L3.4,11.6 H5.2 L6,13.6 Z M12.2,13.6 L13,11.6 H14.8 L15.6,13.6 Z" fill="#F0B13A" opacity="0.85"/></svg>
<svg class="a" style="left:538.5px;top:659.8px;" width="18" height="17" viewBox="0 0 18 17"><path d="M6.2,15.2 L15.4,6.0 C16.7,4.7 16.7,2.7 15.4,1.6 C14.2,0.5 12.4,0.6 11.2,1.8 L2.2,10.8 C0.9,12.1 0.9,14.2 2.1,15.4 C3.4,16.6 5.3,16.6 6.6,15.3 L14.2,7.7 C14.9,7.0 14.9,5.9 14.2,5.2 C13.5,4.6 12.5,4.6 11.8,5.3 L4.6,12.5" fill="none" stroke="#444" stroke-width="1.2" stroke-linecap="round"/></svg>
<svg class="a" style="left:671px;top:655.0px;" width="26" height="26" viewBox="0 0 26 26"><path d="M10.81,5.10 L11.36,2.12 L14.64,2.12 L15.19,5.10 L16.14,5.42 L17.04,5.87 L19.53,4.15 L21.85,6.47 L20.13,8.96 L20.58,9.86 L20.90,10.81 L23.88,11.36 L23.88,14.64 L20.90,15.19 L20.58,16.14 L20.13,17.04 L21.85,19.53 L19.53,21.85 L17.04,20.13 L16.14,20.58 L15.19,20.90 L14.64,23.88 L11.36,23.88 L10.81,20.90 L9.86,20.58 L8.96,20.13 L6.47,21.85 L4.15,19.53 L5.87,17.04 L5.42,16.14 L5.10,15.19 L2.12,14.64 L2.12,11.36 L5.10,10.81 L5.42,9.86 L5.87,8.96 L4.15,6.47 L6.47,4.15 L8.96,5.87 L9.86,5.42Z" fill="none" stroke="#2574C2" stroke-width="1.2" stroke-linejoin="round"/><circle cx="13" cy="13" r="3.6" fill="none" stroke="#2574C2" stroke-width="1.2"/></svg>
<svg class="a" style="left:701px;top:666.5px;" width="7" height="4" viewBox="0 0 7 4"><path d="M0.5,0.5 L3.5,3.2 L6.5,0.5" fill="none" stroke="#b5b5b5" stroke-width="1"/></svg>
<span class="t" style="left:453.50px;top:693.24px;font-size:13.3px;color:#333;font-weight:400;transform:scaleX(1.0095);">MARCOS ROCHA VIEIRA</span>
<span class="t" style="left:453.65px;top:714.57px;font-size:10.9px;color:#333;font-weight:400;transform:scaleX(1.0626);">LAJE PARA O DECK</span>
<div class="a" style="left:454px;top:739.0px;width:254px;height:1px;background:#E6E6E6;border-radius:0px;"></div>
<span class="t" style="left:453.88px;top:752.24px;font-size:12px;color:#333;font-weight:400;transform:scaleX(1.0116);">12 OUT 2023</span>
<span class="t" style="left:564.69px;top:752.24px;font-size:12px;color:#333;font-weight:400;">12 M³</span>
<span class="t" style="left:625.83px;top:750.73px;font-size:14.5px;color:#222;font-weight:400;-webkit-text-stroke:0.35px #222;transform:scaleX(0.9036);">R$ 10.500,00</span>
<div class="a" style="left:772.5px;top:328.4px;width:285px;height:139px;background:#fff;border-radius:8px;box-shadow:0 2px 9px rgba(0,0,0,0.07);border:1px solid #F0F0F0"></div>
<svg class="a" style="left:787px;top:345.0px;" width="22" height="22" viewBox="0 0 22 22"><g fill="none" stroke="#454545" stroke-width="1.1"><circle cx="11" cy="10.9" r="9.1"/><path d="M4.6,17.0 C5.8,15.6 7.6,15.1 9.0,14.4 L9.0,12.9 C8.0,12.0 7.4,10.6 7.4,8.6 C7.4,5.9 8.8,4.4 11,4.4 C13.2,4.4 14.6,5.9 14.6,8.6 C14.6,10.6 14.0,12.0 13.0,12.9 L13.0,14.4 C14.4,15.1 16.2,15.6 17.4,17.0"/></g></svg>
<svg class="a" style="left:816px;top:346.0px;" width="20" height="20" viewBox="0 0 20 20"><circle cx="10" cy="10" r="8.8" fill="none" stroke="#F0B13A" stroke-width="1.05"/><circle cx="9.9" cy="5.9" r="1.15" fill="#F0B13A"/><path d="M8.8,8.7 H10.2 V14.6 M8.4,14.7 H11.8" fill="none" stroke="#F0B13A" stroke-width="1.25"/></svg>
<svg class="a" style="left:845px;top:349.0px;" width="18" height="15" viewBox="0 0 18 15"><g fill="none" stroke="#F0B13A" stroke-width="1.1" stroke-linejoin="round"><rect x="0.95" y="1.35" width="16.1" height="12.2" rx="0.6"/><ellipse cx="5.1" cy="4.5" rx="1.5" ry="1.75"/><path d="M2.3,9.8 C2.3,8.2 3.6,7.6 5.1,7.6 C6.6,7.6 7.9,8.2 7.9,9.8 Z"/><path d="M10.9,4.4 C11.6,6.2 12.8,7.6 14.4,8.4" stroke-width="1.2"/></g><ellipse cx="11" cy="4.3" rx="0.9" ry="1.3" transform="rotate(-30 11 4.3)" fill="#F0B13A"/><ellipse cx="14.4" cy="8.4" rx="1.3" ry="0.9" transform="rotate(-30 14.4 8.4)" fill="#F0B13A"/><path d="M2.6,13.6 L3.4,11.6 H5.2 L6,13.6 Z M12.2,13.6 L13,11.6 H14.8 L15.6,13.6 Z" fill="#F0B13A" opacity="0.85"/></svg>
<svg class="a" style="left:872.5px;top:347.8px;" width="18" height="17" viewBox="0 0 18 17"><path d="M6.2,15.2 L15.4,6.0 C16.7,4.7 16.7,2.7 15.4,1.6 C14.2,0.5 12.4,0.6 11.2,1.8 L2.2,10.8 C0.9,12.1 0.9,14.2 2.1,15.4 C3.4,16.6 5.3,16.6 6.6,15.3 L14.2,7.7 C14.9,7.0 14.9,5.9 14.2,5.2 C13.5,4.6 12.5,4.6 11.8,5.3 L4.6,12.5" fill="none" stroke="#2FA86A" stroke-width="1.2" stroke-linecap="round"/></svg>
<svg class="a" style="left:1005px;top:343.0px;" width="26" height="26" viewBox="0 0 26 26"><path d="M10.81,5.10 L11.36,2.12 L14.64,2.12 L15.19,5.10 L16.14,5.42 L17.04,5.87 L19.53,4.15 L21.85,6.47 L20.13,8.96 L20.58,9.86 L20.90,10.81 L23.88,11.36 L23.88,14.64 L20.90,15.19 L20.58,16.14 L20.13,17.04 L21.85,19.53 L19.53,21.85 L17.04,20.13 L16.14,20.58 L15.19,20.90 L14.64,23.88 L11.36,23.88 L10.81,20.90 L9.86,20.58 L8.96,20.13 L6.47,21.85 L4.15,19.53 L5.87,17.04 L5.42,16.14 L5.10,15.19 L2.12,14.64 L2.12,11.36 L5.10,10.81 L5.42,9.86 L5.87,8.96 L4.15,6.47 L6.47,4.15 L8.96,5.87 L9.86,5.42Z" fill="none" stroke="#2574C2" stroke-width="1.2" stroke-linejoin="round"/><circle cx="13" cy="13" r="3.6" fill="none" stroke="#2574C2" stroke-width="1.2"/></svg>
<svg class="a" style="left:1035px;top:354.5px;" width="7" height="4" viewBox="0 0 7 4"><path d="M0.5,0.5 L3.5,3.2 L6.5,0.5" fill="none" stroke="#b5b5b5" stroke-width="1"/></svg>
<span class="t" style="left:787.51px;top:381.24px;font-size:13.3px;color:#333;font-weight:400;">MRV CONSTRUÇÕES LTDA</span>
<span class="t" style="left:787.66px;top:402.57px;font-size:10.9px;color:#333;font-weight:400;transform:scaleX(1.0496);">LOTE VAGO DA RUA</span>
<div class="a" style="left:788px;top:427.0px;width:254px;height:1px;background:#E6E6E6;border-radius:0px;"></div>
<span class="t" style="left:788.33px;top:440.24px;font-size:12px;color:#333;font-weight:400;transform:scaleX(1.0059);">01 FEV 2025</span>
<span class="t" style="left:892.06px;top:440.24px;font-size:12px;color:#333;font-weight:400;transform:scaleX(1.0424);">80 M³</span>
<span class="t" style="left:958.24px;top:438.73px;font-size:14.5px;color:#222;font-weight:400;-webkit-text-stroke:0.35px #222;transform:scaleX(0.8905);">R$ 110.500,00</span>
<div class="a" style="left:772.5px;top:484.4px;width:285px;height:139px;background:#fff;border-radius:8px;box-shadow:0 2px 9px rgba(0,0,0,0.07);border:1px solid #F0F0F0"></div>
<svg class="a" style="left:787px;top:501.0px;" width="22" height="22" viewBox="0 0 22 22"><g fill="none" stroke="#454545" stroke-width="1.1"><circle cx="11" cy="10.9" r="9.1"/><path d="M4.6,17.0 C5.8,15.6 7.6,15.1 9.0,14.4 L9.0,12.9 C8.0,12.0 7.4,10.6 7.4,8.6 C7.4,5.9 8.8,4.4 11,4.4 C13.2,4.4 14.6,5.9 14.6,8.6 C14.6,10.6 14.0,12.0 13.0,12.9 L13.0,14.4 C14.4,15.1 16.2,15.6 17.4,17.0"/></g></svg>
<svg class="a" style="left:816px;top:502.0px;" width="20" height="20" viewBox="0 0 20 20"><circle cx="10" cy="10" r="8.8" fill="none" stroke="#F0B13A" stroke-width="1.05"/><circle cx="9.9" cy="5.9" r="1.15" fill="#F0B13A"/><path d="M8.8,8.7 H10.2 V14.6 M8.4,14.7 H11.8" fill="none" stroke="#F0B13A" stroke-width="1.25"/></svg>
<svg class="a" style="left:845px;top:505.0px;" width="18" height="15" viewBox="0 0 18 15"><g fill="none" stroke="#F0B13A" stroke-width="1.1" stroke-linejoin="round"><rect x="0.95" y="1.35" width="16.1" height="12.2" rx="0.6"/><ellipse cx="5.1" cy="4.5" rx="1.5" ry="1.75"/><path d="M2.3,9.8 C2.3,8.2 3.6,7.6 5.1,7.6 C6.6,7.6 7.9,8.2 7.9,9.8 Z"/><path d="M10.9,4.4 C11.6,6.2 12.8,7.6 14.4,8.4" stroke-width="1.2"/></g><ellipse cx="11" cy="4.3" rx="0.9" ry="1.3" transform="rotate(-30 11 4.3)" fill="#F0B13A"/><ellipse cx="14.4" cy="8.4" rx="1.3" ry="0.9" transform="rotate(-30 14.4 8.4)" fill="#F0B13A"/><path d="M2.6,13.6 L3.4,11.6 H5.2 L6,13.6 Z M12.2,13.6 L13,11.6 H14.8 L15.6,13.6 Z" fill="#F0B13A" opacity="0.85"/></svg>
<svg class="a" style="left:872.5px;top:503.8px;" width="18" height="17" viewBox="0 0 18 17"><path d="M6.2,15.2 L15.4,6.0 C16.7,4.7 16.7,2.7 15.4,1.6 C14.2,0.5 12.4,0.6 11.2,1.8 L2.2,10.8 C0.9,12.1 0.9,14.2 2.1,15.4 C3.4,16.6 5.3,16.6 6.6,15.3 L14.2,7.7 C14.9,7.0 14.9,5.9 14.2,5.2 C13.5,4.6 12.5,4.6 11.8,5.3 L4.6,12.5" fill="none" stroke="#2FA86A" stroke-width="1.2" stroke-linecap="round"/></svg>
<svg class="a" style="left:1005px;top:499.0px;" width="26" height="26" viewBox="0 0 26 26"><path d="M10.81,5.10 L11.36,2.12 L14.64,2.12 L15.19,5.10 L16.14,5.42 L17.04,5.87 L19.53,4.15 L21.85,6.47 L20.13,8.96 L20.58,9.86 L20.90,10.81 L23.88,11.36 L23.88,14.64 L20.90,15.19 L20.58,16.14 L20.13,17.04 L21.85,19.53 L19.53,21.85 L17.04,20.13 L16.14,20.58 L15.19,20.90 L14.64,23.88 L11.36,23.88 L10.81,20.90 L9.86,20.58 L8.96,20.13 L6.47,21.85 L4.15,19.53 L5.87,17.04 L5.42,16.14 L5.10,15.19 L2.12,14.64 L2.12,11.36 L5.10,10.81 L5.42,9.86 L5.87,8.96 L4.15,6.47 L6.47,4.15 L8.96,5.87 L9.86,5.42Z" fill="none" stroke="#2574C2" stroke-width="1.2" stroke-linejoin="round"/><circle cx="13" cy="13" r="3.6" fill="none" stroke="#2574C2" stroke-width="1.2"/></svg>
<svg class="a" style="left:1035px;top:510.5px;" width="7" height="4" viewBox="0 0 7 4"><path d="M0.5,0.5 L3.5,3.2 L6.5,0.5" fill="none" stroke="#b5b5b5" stroke-width="1"/></svg>
<span class="t" style="left:787.50px;top:537.24px;font-size:13.3px;color:#333;font-weight:400;transform:scaleX(1.0102);">POLIMIX CONCRETO LTDA</span>
<span class="t" style="left:788.02px;top:558.57px;font-size:10.9px;color:#333;font-weight:400;transform:scaleX(1.0520);">CONDOMÍNIO LUXO</span>
<div class="a" style="left:788px;top:583.0px;width:254px;height:1px;background:#E6E6E6;border-radius:0px;"></div>
<span class="t" style="left:787.89px;top:596.24px;font-size:12px;color:#333;font-weight:400;transform:scaleX(0.9934);">15 OUT 2024</span>
<span class="t" style="left:886.58px;top:596.24px;font-size:12px;color:#333;font-weight:400;transform:scaleX(1.0350);">240 M³</span>
<span class="t" style="left:952.38px;top:594.73px;font-size:14.5px;color:#222;font-weight:400;-webkit-text-stroke:0.35px #222;transform:scaleX(0.9423);">R$ 880.000,00</span>
<div class="a" style="left:1106.5px;top:328.2px;width:285px;height:158.5px;background:#fff;border-radius:8px;box-shadow:0 2px 9px rgba(0,0,0,0.07);border:1px solid #F0F0F0"></div>
<svg class="a" style="left:1121px;top:344.8px;" width="22" height="22" viewBox="0 0 22 22"><g fill="none" stroke="#454545" stroke-width="1.1"><circle cx="11" cy="10.9" r="9.1"/><path d="M4.6,17.0 C5.8,15.6 7.6,15.1 9.0,14.4 L9.0,12.9 C8.0,12.0 7.4,10.6 7.4,8.6 C7.4,5.9 8.8,4.4 11,4.4 C13.2,4.4 14.6,5.9 14.6,8.6 C14.6,10.6 14.0,12.0 13.0,12.9 L13.0,14.4 C14.4,15.1 16.2,15.6 17.4,17.0"/></g></svg>
<svg class="a" style="left:1150px;top:345.8px;" width="20" height="20" viewBox="0 0 20 20"><circle cx="10" cy="10" r="8.8" fill="none" stroke="#F0B13A" stroke-width="1.05"/><circle cx="9.9" cy="5.9" r="1.15" fill="#F0B13A"/><path d="M8.8,8.7 H10.2 V14.6 M8.4,14.7 H11.8" fill="none" stroke="#F0B13A" stroke-width="1.25"/></svg>
<svg class="a" style="left:1179px;top:348.8px;" width="18" height="15" viewBox="0 0 18 15"><g fill="none" stroke="#F0B13A" stroke-width="1.1" stroke-linejoin="round"><rect x="0.95" y="1.35" width="16.1" height="12.2" rx="0.6"/><ellipse cx="5.1" cy="4.5" rx="1.5" ry="1.75"/><path d="M2.3,9.8 C2.3,8.2 3.6,7.6 5.1,7.6 C6.6,7.6 7.9,8.2 7.9,9.8 Z"/><path d="M10.9,4.4 C11.6,6.2 12.8,7.6 14.4,8.4" stroke-width="1.2"/></g><ellipse cx="11" cy="4.3" rx="0.9" ry="1.3" transform="rotate(-30 11 4.3)" fill="#F0B13A"/><ellipse cx="14.4" cy="8.4" rx="1.3" ry="0.9" transform="rotate(-30 14.4 8.4)" fill="#F0B13A"/><path d="M2.6,13.6 L3.4,11.6 H5.2 L6,13.6 Z M12.2,13.6 L13,11.6 H14.8 L15.6,13.6 Z" fill="#F0B13A" opacity="0.85"/></svg>
<svg class="a" style="left:1206px;top:345.8px;" width="20" height="20" viewBox="0 0 20 20"><g fill="none" stroke="#2574C2" stroke-width="1" stroke-linecap="round" stroke-linejoin="round"><path d="M6.6,9.4 C6.5,7.8 5.6,6.9 4.4,7.5 C2.5,8.6 1.3,12.2 1.7,14.4 C2.1,16.2 3.6,16.1 4.5,15.3 C5.3,14.7 6.1,15.1 6.4,16.1 C6.8,17.3 7.9,18.1 9.2,18.2 C10.2,18.3 10.9,18.1 11.3,17.8"/><path d="M10.5,18.1 C10.3,16.9 15.4,3.8 16.3,2.6 C16.9,1.8 18.6,1.9 18.8,3 C18.9,4.1 13.4,17.3 12.3,18 C11.7,18.5 10.7,18.7 10.5,18.1 Z"/><path d="M12.2,15.8 L17.3,3.5 M10.2,8.8 L11.6,8.7"/></g></svg>
<svg class="a" style="left:1339px;top:342.8px;" width="26" height="26" viewBox="0 0 26 26"><path d="M10.81,5.10 L11.36,2.12 L14.64,2.12 L15.19,5.10 L16.14,5.42 L17.04,5.87 L19.53,4.15 L21.85,6.47 L20.13,8.96 L20.58,9.86 L20.90,10.81 L23.88,11.36 L23.88,14.64 L20.90,15.19 L20.58,16.14 L20.13,17.04 L21.85,19.53 L19.53,21.85 L17.04,20.13 L16.14,20.58 L15.19,20.90 L14.64,23.88 L11.36,23.88 L10.81,20.90 L9.86,20.58 L8.96,20.13 L6.47,21.85 L4.15,19.53 L5.87,17.04 L5.42,16.14 L5.10,15.19 L2.12,14.64 L2.12,11.36 L5.10,10.81 L5.42,9.86 L5.87,8.96 L4.15,6.47 L6.47,4.15 L8.96,5.87 L9.86,5.42Z" fill="none" stroke="#2574C2" stroke-width="1.2" stroke-linejoin="round"/><circle cx="13" cy="13" r="3.6" fill="none" stroke="#2574C2" stroke-width="1.2"/></svg>
<svg class="a" style="left:1369px;top:354.3px;" width="7" height="4" viewBox="0 0 7 4"><path d="M0.5,0.5 L3.5,3.2 L6.5,0.5" fill="none" stroke="#b5b5b5" stroke-width="1"/></svg>
<span class="t" style="left:1122.57px;top:382.22px;font-size:13.8px;color:#222;font-weight:400;-webkit-text-stroke:0.35px #222;transform:scaleX(0.9827);">ABC-1</span>
<span class="t" style="left:1121.34px;top:401.74px;font-size:13.3px;color:#333;font-weight:400;transform:scaleX(1.0226);">ILHAMIX CONCRETO LTDA</span>
<span class="t" style="left:1121.66px;top:423.07px;font-size:10.9px;color:#333;font-weight:400;transform:scaleX(1.0476);">PRÉDIO ANEXO II</span>
<div class="a" style="left:1122px;top:447.49999999999994px;width:254px;height:1px;background:#E6E6E6;border-radius:0px;"></div>
<span class="t" style="left:1122.34px;top:460.74px;font-size:12px;color:#333;font-weight:400;transform:scaleX(0.9783);">01 ABR 2025</span>
<span class="t" style="left:1225.10px;top:460.74px;font-size:12px;color:#333;font-weight:400;transform:scaleX(0.9804);">144 M³</span>
<span class="t" style="left:1295.15px;top:459.23px;font-size:14.5px;color:#222;font-weight:400;-webkit-text-stroke:0.35px #222;transform:scaleX(0.9288);">R$ 88.500,00</span>
<div class="a" style="left:1106.5px;top:504.0px;width:285px;height:158px;background:#fff;border-radius:8px;box-shadow:0 2px 9px rgba(0,0,0,0.07);border:1px solid #F0F0F0"></div>
<svg class="a" style="left:1121px;top:520.6px;" width="22" height="22" viewBox="0 0 22 22"><g fill="none" stroke="#454545" stroke-width="1.1"><circle cx="11" cy="10.9" r="9.1"/><path d="M4.6,17.0 C5.8,15.6 7.6,15.1 9.0,14.4 L9.0,12.9 C8.0,12.0 7.4,10.6 7.4,8.6 C7.4,5.9 8.8,4.4 11,4.4 C13.2,4.4 14.6,5.9 14.6,8.6 C14.6,10.6 14.0,12.0 13.0,12.9 L13.0,14.4 C14.4,15.1 16.2,15.6 17.4,17.0"/></g></svg>
<svg class="a" style="left:1150px;top:521.6px;" width="20" height="20" viewBox="0 0 20 20"><circle cx="10" cy="10" r="8.8" fill="none" stroke="#F0B13A" stroke-width="1.05"/><circle cx="9.9" cy="5.9" r="1.15" fill="#F0B13A"/><path d="M8.8,8.7 H10.2 V14.6 M8.4,14.7 H11.8" fill="none" stroke="#F0B13A" stroke-width="1.25"/></svg>
<svg class="a" style="left:1179px;top:524.6px;" width="18" height="15" viewBox="0 0 18 15"><g fill="none" stroke="#F0B13A" stroke-width="1.1" stroke-linejoin="round"><rect x="0.95" y="1.35" width="16.1" height="12.2" rx="0.6"/><ellipse cx="5.1" cy="4.5" rx="1.5" ry="1.75"/><path d="M2.3,9.8 C2.3,8.2 3.6,7.6 5.1,7.6 C6.6,7.6 7.9,8.2 7.9,9.8 Z"/><path d="M10.9,4.4 C11.6,6.2 12.8,7.6 14.4,8.4" stroke-width="1.2"/></g><ellipse cx="11" cy="4.3" rx="0.9" ry="1.3" transform="rotate(-30 11 4.3)" fill="#F0B13A"/><ellipse cx="14.4" cy="8.4" rx="1.3" ry="0.9" transform="rotate(-30 14.4 8.4)" fill="#F0B13A"/><path d="M2.6,13.6 L3.4,11.6 H5.2 L6,13.6 Z M12.2,13.6 L13,11.6 H14.8 L15.6,13.6 Z" fill="#F0B13A" opacity="0.85"/></svg>
<svg class="a" style="left:1206px;top:521.6px;" width="20" height="20" viewBox="0 0 20 20"><g fill="none" stroke="#2574C2" stroke-width="1" stroke-linecap="round" stroke-linejoin="round"><path d="M6.6,9.4 C6.5,7.8 5.6,6.9 4.4,7.5 C2.5,8.6 1.3,12.2 1.7,14.4 C2.1,16.2 3.6,16.1 4.5,15.3 C5.3,14.7 6.1,15.1 6.4,16.1 C6.8,17.3 7.9,18.1 9.2,18.2 C10.2,18.3 10.9,18.1 11.3,17.8"/><path d="M10.5,18.1 C10.3,16.9 15.4,3.8 16.3,2.6 C16.9,1.8 18.6,1.9 18.8,3 C18.9,4.1 13.4,17.3 12.3,18 C11.7,18.5 10.7,18.7 10.5,18.1 Z"/><path d="M12.2,15.8 L17.3,3.5 M10.2,8.8 L11.6,8.7"/></g></svg>
<svg class="a" style="left:1339px;top:518.6px;" width="26" height="26" viewBox="0 0 26 26"><path d="M10.81,5.10 L11.36,2.12 L14.64,2.12 L15.19,5.10 L16.14,5.42 L17.04,5.87 L19.53,4.15 L21.85,6.47 L20.13,8.96 L20.58,9.86 L20.90,10.81 L23.88,11.36 L23.88,14.64 L20.90,15.19 L20.58,16.14 L20.13,17.04 L21.85,19.53 L19.53,21.85 L17.04,20.13 L16.14,20.58 L15.19,20.90 L14.64,23.88 L11.36,23.88 L10.81,20.90 L9.86,20.58 L8.96,20.13 L6.47,21.85 L4.15,19.53 L5.87,17.04 L5.42,16.14 L5.10,15.19 L2.12,14.64 L2.12,11.36 L5.10,10.81 L5.42,9.86 L5.87,8.96 L4.15,6.47 L6.47,4.15 L8.96,5.87 L9.86,5.42Z" fill="none" stroke="#2574C2" stroke-width="1.2" stroke-linejoin="round"/><circle cx="13" cy="13" r="3.6" fill="none" stroke="#2574C2" stroke-width="1.2"/></svg>
<svg class="a" style="left:1369px;top:530.1px;" width="7" height="4" viewBox="0 0 7 4"><path d="M0.5,0.5 L3.5,3.2 L6.5,0.5" fill="none" stroke="#b5b5b5" stroke-width="1"/></svg>
<span class="t" style="left:1121.41px;top:558.02px;font-size:13.8px;color:#222;font-weight:400;-webkit-text-stroke:0.35px #222;transform:scaleX(1.0496);">DEF-0</span>
<span class="t" style="left:1121.92px;top:577.54px;font-size:13.3px;color:#333;font-weight:400;">CONCRELAGO CONCRETOS</span>
<span class="t" style="left:1121.66px;top:598.87px;font-size:10.9px;color:#333;font-weight:400;transform:scaleX(1.0502);">MELHORIA NO PRÉDIO</span>
<div class="a" style="left:1122px;top:623.3000000000001px;width:254px;height:1px;background:#E6E6E6;border-radius:0px;"></div>
<span class="t" style="left:1122.35px;top:636.54px;font-size:12px;color:#333;font-weight:400;transform:scaleX(0.9789);">31 MAR 2025</span>
<span class="t" style="left:1227.36px;top:636.54px;font-size:12px;color:#333;font-weight:400;transform:scaleX(1.0389);">72 M³</span>
<span class="t" style="left:1293.93px;top:635.03px;font-size:14.5px;color:#222;font-weight:400;-webkit-text-stroke:0.35px #222;transform:scaleX(0.9025);">R$ 90.000,00</span>
<div class="a" style="left:285.7px;top:518px;width:87.3px;height:69.7px;background:#fff;border-radius:5px;box-shadow:0 2px 9px rgba(0,0,0,0.11)"></div>
<span class="t" style="left:320.62px;top:533.13px;font-size:10.0px;color:#2a2a2a;font-weight:400;transform:scaleX(0.9465);">EDITAR</span>
<svg class="a" style="left:297px;top:529.1px;" width="17" height="17" viewBox="0 0 17 17"><path d="M9.6,3.3 H2.2 C1.4,3.3 0.9,3.8 0.9,4.6 V13.6 C0.9,14.4 1.4,14.9 2.2,14.9 H11 C11.8,14.9 12.3,14.4 12.3,13.6 V7.6" fill="none" stroke="#F5C66A" stroke-width="1.05"/><g transform="rotate(-44.4 9.85 5.35)"><rect x="3.7" y="4.25" width="11" height="2.2" fill="#fff" stroke="#F0B23A" stroke-width="0.8"/><path d="M4.8,4.3 V6.4 M6.2,4.3 V6.4 M7.6,4.3 V6.4 M9,4.3 V6.4 M10.4,4.3 V6.4 M11.8,4.3 V6.4 M13.2,4.3 V6.4" stroke="#F6CD7E" stroke-width="0.5"/><path d="M3.7,4.1 L1.6,5.35 L3.7,6.6 Z" fill="#F0AE2E"/><rect x="14.4" y="4.1" width="1.7" height="2.5" rx="0.6" fill="#F0AE2E"/></g></svg>
<div class="a" style="left:285.7px;top:551.8px;width:87.3px;height:1px;background:#EFEFEF;border-radius:0px;"></div>
<span class="t" style="left:320.63px;top:565.03px;font-size:10.0px;color:#2a2a2a;font-weight:400;transform:scaleX(0.9435);">EXCLUIR</span>
<svg class="a" style="left:299px;top:560.7px;" width="13" height="17" viewBox="0 0 13 17"><path d="M0.3,2.4 H12.1" stroke="#D9473D" stroke-width="1.2"/><path d="M4.1,2.4 C4.1,0.5 7.9,0.5 7.9,2.4" fill="none" stroke="#D46A62" stroke-width="1"/><path d="M1.4,2.6 V14.3 C1.4,15 1.9,15.4 2.6,15.4 H9.4 C10.1,15.4 10.6,15 10.6,14.3 V2.6" fill="none" stroke="#C9615A" stroke-width="1.1"/><rect x="3.6" y="4.5" width="4.8" height="8.3" fill="#D7A29F"/><path d="M4.5,4.5 V12.8 M5.6,4.5 V12.8 M6.5,4.5 V12.8 M7.5,4.5 V12.8" stroke="#C4726C" stroke-width="0.45"/></svg>
<div class="a" style="left:572.6px;top:672.6px;width:134.6px;height:166.7px;background:#fff;border-radius:5px;box-shadow:0 2px 9px rgba(0,0,0,0.11)"></div>
<span class="t" style="left:607.32px;top:688.53px;font-size:10.0px;color:#2a2a2a;font-weight:400;transform:scaleX(0.9523);">EDITAR</span>
<svg class="a" style="left:584px;top:684.5px;" width="17" height="17" viewBox="0 0 17 17"><path d="M9.6,3.3 H2.2 C1.4,3.3 0.9,3.8 0.9,4.6 V13.6 C0.9,14.4 1.4,14.9 2.2,14.9 H11 C11.8,14.9 12.3,14.4 12.3,13.6 V7.6" fill="none" stroke="#F5C66A" stroke-width="1.05"/><g transform="rotate(-44.4 9.85 5.35)"><rect x="3.7" y="4.25" width="11" height="2.2" fill="#fff" stroke="#F0B23A" stroke-width="0.8"/><path d="M4.8,4.3 V6.4 M6.2,4.3 V6.4 M7.6,4.3 V6.4 M9,4.3 V6.4 M10.4,4.3 V6.4 M11.8,4.3 V6.4 M13.2,4.3 V6.4" stroke="#F6CD7E" stroke-width="0.5"/><path d="M3.7,4.1 L1.6,5.35 L3.7,6.6 Z" fill="#F0AE2E"/><rect x="14.4" y="4.1" width="1.7" height="2.5" rx="0.6" fill="#F0AE2E"/></g></svg>
<div class="a" style="left:572.6px;top:706.9px;width:134.6px;height:1px;background:#EFEFEF;border-radius:0px;"></div>
<span class="t" style="left:607.62px;top:720.53px;font-size:10.0px;color:#2a2a2a;font-weight:400;transform:scaleX(0.9465);">GERAR CONTRATO</span>
<svg class="a" style="left:586px;top:716.7px;" width="13" height="16" viewBox="0 0 13 16"><path d="M0.6,0.6 H7.8 L11.8,4.6 V15.4 H0.6 Z" fill="none" stroke="#3D85D0" stroke-width="1" stroke-linejoin="round"/><path d="M7.8,0.6 V4.6 H11.8" fill="none" stroke="#3D85D0" stroke-width="0.8"/><path d="M2.6,3.2 H7 M2.6,5 H9.6 M2.6,6.8 H9.6 M2.6,8.4 H9.6" stroke="#3D85D0" stroke-width="0.9" opacity="0.8"/><path d="M2.6,11.6 L4.4,10.6 V12.6 Z M4.4,11.6 H8" fill="#3D85D0" stroke="#3D85D0" stroke-width="0.7"/></svg>
<div class="a" style="left:572.6px;top:738.9px;width:134.6px;height:1px;background:#EFEFEF;border-radius:0px;"></div>
<span class="t" style="left:607.25px;top:752.53px;font-size:10.0px;color:#2a2a2a;font-weight:400;transform:scaleX(0.9212);">IMPRIMIR</span>
<svg class="a" style="left:584.2px;top:748.3px;" width="17" height="16" viewBox="0 0 17 16"><g fill="none" stroke="#4A90D9" stroke-width="1.1" stroke-linejoin="round" opacity="0.9"><rect x="4" y="0.7" width="8.6" height="3.9" rx="0.8"/><path d="M3.6,11.4 H1.8 C1.1,11.4 0.7,11 0.7,10.2 V5.9 C0.7,5.1 1.2,4.6 2,4.6 H14.6 C15.4,4.6 15.9,5.1 15.9,5.9 V10.2 C15.9,11 15.5,11.4 14.8,11.4 H13"/><rect x="3.8" y="8.8" width="9" height="6.4" rx="0.8" fill="#DCEAF8"/></g><path d="M5.8,11.4 H10.8 M5.8,13 H10.8" stroke="#4A90D9" stroke-width="0.9"/></svg>
<div class="a" style="left:572.6px;top:770.9px;width:134.6px;height:1px;background:#EFEFEF;border-radius:0px;"></div>
<span class="t" style="left:607.35px;top:784.53px;font-size:10.0px;color:#2a2a2a;font-weight:400;transform:scaleX(0.9159);">HISTÓRICO</span>
<svg class="a" style="left:586px;top:780.9px;" width="15" height="16" viewBox="0 0 15 16"><g fill="none" stroke="#555" stroke-width="0.95"><path d="M0.6,0.6 H11.2 V9.6"/><path d="M0.6,0.6 V14.6 H8"/><path d="M2.8,3 H9 M2.8,5.8 H9 M2.8,8.2 H7.4 M2.8,10.4 H6.8"/></g><rect x="9" y="10" width="4.8" height="5.2" fill="#fff" stroke="#444" stroke-width="0.95"/><path d="M10.2,11.3 L12.6,14 M12.6,11.3 L10.2,14" stroke="#444" stroke-width="0.8"/></svg>
<div class="a" style="left:572.6px;top:802.9px;width:134.6px;height:1px;background:#EFEFEF;border-radius:0px;"></div>
<span class="t" style="left:607.32px;top:816.53px;font-size:10.0px;color:#2a2a2a;font-weight:400;transform:scaleX(0.9507);">EXCLUIR</span>
<svg class="a" style="left:586px;top:812.2px;" width="13" height="17" viewBox="0 0 13 17"><path d="M0.3,2.4 H12.1" stroke="#D9473D" stroke-width="1.2"/><path d="M4.1,2.4 C4.1,0.5 7.9,0.5 7.9,2.4" fill="none" stroke="#D46A62" stroke-width="1"/><path d="M1.4,2.6 V14.3 C1.4,15 1.9,15.4 2.6,15.4 H9.4 C10.1,15.4 10.6,15 10.6,14.3 V2.6" fill="none" stroke="#C9615A" stroke-width="1.1"/><rect x="3.6" y="4.5" width="4.8" height="8.3" fill="#D7A29F"/><path d="M4.5,4.5 V12.8 M5.6,4.5 V12.8 M6.5,4.5 V12.8 M7.5,4.5 V12.8" stroke="#C4726C" stroke-width="0.45"/></svg>
<div class="a" style="left:886.7px;top:280px;width:174.3px;height:142px;background:#fff;border-radius:5px;box-shadow:0 2px 9px rgba(0,0,0,0.11)"></div>
<span class="t" style="left:921.42px;top:295.54px;font-size:10.0px;color:#2a2a2a;font-weight:400;transform:scaleX(0.9552);">EDITAR</span>
<svg class="a" style="left:898px;top:291.5px;" width="17" height="17" viewBox="0 0 17 17"><path d="M9.6,3.3 H2.2 C1.4,3.3 0.9,3.8 0.9,4.6 V13.6 C0.9,14.4 1.4,14.9 2.2,14.9 H11 C11.8,14.9 12.3,14.4 12.3,13.6 V7.6" fill="none" stroke="#F5C66A" stroke-width="1.05"/><g transform="rotate(-44.4 9.85 5.35)"><rect x="3.7" y="4.25" width="11" height="2.2" fill="#fff" stroke="#F0B23A" stroke-width="0.8"/><path d="M4.8,4.3 V6.4 M6.2,4.3 V6.4 M7.6,4.3 V6.4 M9,4.3 V6.4 M10.4,4.3 V6.4 M11.8,4.3 V6.4 M13.2,4.3 V6.4" stroke="#F6CD7E" stroke-width="0.5"/><path d="M3.7,4.1 L1.6,5.35 L3.7,6.6 Z" fill="#F0AE2E"/><rect x="14.4" y="4.1" width="1.7" height="2.5" rx="0.6" fill="#F0AE2E"/></g></svg>
<div class="a" style="left:886.7px;top:316.2px;width:174.3px;height:1px;background:#EFEFEF;border-radius:0px;"></div>
<span class="t" style="left:921.41px;top:330.14px;font-size:10.0px;color:#2a2a2a;font-weight:400;transform:scaleX(0.9621);">MOVER PARA A ESQUERDA</span>
<svg class="a" style="left:898px;top:327.1px;" width="16" height="16" viewBox="0 0 16 16"><circle cx="8" cy="8" r="7.2" fill="none" stroke="#3a3a3a" stroke-width="0.95"/><path d="M11.2,8 H4.6 M6.8,6 L4.6,8 L6.8,10" fill="none" stroke="#333" stroke-width="1"/></svg>
<div class="a" style="left:886.7px;top:350.8px;width:174.3px;height:1px;background:#EFEFEF;border-radius:0px;"></div>
<span class="t" style="left:921.41px;top:364.74px;font-size:10.0px;color:#2a2a2a;font-weight:400;transform:scaleX(0.9635);">MOVER PARA A DIREITA</span>
<svg class="a" style="left:898px;top:361.7px;" width="16" height="16" viewBox="0 0 16 16"><circle cx="8" cy="8" r="7.2" fill="none" stroke="#3a3a3a" stroke-width="0.95"/><path d="M4.8,8 H11.4 M9.2,6 L11.4,8 L9.2,10" fill="none" stroke="#333" stroke-width="1"/></svg>
<div class="a" style="left:886.7px;top:385.4px;width:174.3px;height:1px;background:#EFEFEF;border-radius:0px;"></div>
<span class="t" style="left:921.42px;top:399.34px;font-size:10.0px;color:#2a2a2a;font-weight:400;transform:scaleX(0.9531);">EXCLUIR</span>
<svg class="a" style="left:900px;top:395.0px;" width="13" height="17" viewBox="0 0 13 17"><path d="M0.3,2.4 H12.1" stroke="#D9473D" stroke-width="1.2"/><path d="M4.1,2.4 C4.1,0.5 7.9,0.5 7.9,2.4" fill="none" stroke="#D46A62" stroke-width="1"/><path d="M1.4,2.6 V14.3 C1.4,15 1.9,15.4 2.6,15.4 H9.4 C10.1,15.4 10.6,15 10.6,14.3 V2.6" fill="none" stroke="#C9615A" stroke-width="1.1"/><rect x="3.6" y="4.5" width="4.8" height="8.3" fill="#D7A29F"/><path d="M4.5,4.5 V12.8 M5.6,4.5 V12.8 M6.5,4.5 V12.8 M7.5,4.5 V12.8" stroke="#C4726C" stroke-width="0.45"/></svg>
<div class="a" style="left:1210.8px;top:536.7px;width:164.5px;height:325.8px;background:#fff;border-radius:5px;box-shadow:0 2px 9px rgba(0,0,0,0.11)"></div>
<span class="t" style="left:1245.42px;top:552.03px;font-size:10.0px;color:#2a2a2a;font-weight:400;transform:scaleX(0.9523);">EDITAR</span>
<svg class="a" style="left:1222px;top:548.0px;" width="17" height="17" viewBox="0 0 17 17"><path d="M9.6,3.3 H2.2 C1.4,3.3 0.9,3.8 0.9,4.6 V13.6 C0.9,14.4 1.4,14.9 2.2,14.9 H11 C11.8,14.9 12.3,14.4 12.3,13.6 V7.6" fill="none" stroke="#F5C66A" stroke-width="1.05"/><g transform="rotate(-44.4 9.85 5.35)"><rect x="3.7" y="4.25" width="11" height="2.2" fill="#fff" stroke="#F0B23A" stroke-width="0.8"/><path d="M4.8,4.3 V6.4 M6.2,4.3 V6.4 M7.6,4.3 V6.4 M9,4.3 V6.4 M10.4,4.3 V6.4 M11.8,4.3 V6.4 M13.2,4.3 V6.4" stroke="#F6CD7E" stroke-width="0.5"/><path d="M3.7,4.1 L1.6,5.35 L3.7,6.6 Z" fill="#F0AE2E"/><rect x="14.4" y="4.1" width="1.7" height="2.5" rx="0.6" fill="#F0AE2E"/></g></svg>
<div class="a" style="left:1210.8px;top:570.8px;width:164.5px;height:1px;background:#EFEFEF;border-radius:0px;"></div>
<span class="t" style="left:1245.43px;top:584.03px;font-size:10.0px;color:#2a2a2a;font-weight:400;transform:scaleX(0.9438);">REAJUSTE DE PREÇO</span>
<svg class="a" style="left:1222px;top:579.0px;" width="17" height="17" viewBox="0 0 17 17"><g fill="none" stroke="#2FA86A" stroke-width="1" stroke-linejoin="round" opacity="0.9"><path d="M9.8,1.2 L15.6,1.4 L15.8,7.2 L7.2,15.8 L1.2,9.8 Z"/><circle cx="12.8" cy="4.2" r="1.1"/><path d="M9.6,6.6 C8.6,5.8 7,6.4 7.4,7.6 C7.8,8.6 9.6,8.4 9.6,9.6 C9.8,10.8 8.2,11.2 7.2,10.2 M6.8,5.9 L10,11"/></g></svg>
<div class="a" style="left:1210.8px;top:602.8px;width:164.5px;height:1px;background:#EFEFEF;border-radius:0px;"></div>
<span class="t" style="left:1245.42px;top:616.03px;font-size:10.0px;color:#2a2a2a;font-weight:400;transform:scaleX(0.9476);">PROJEÇÃO DE CARTEIRA</span>
<svg class="a" style="left:1223.5px;top:611.6px;" width="14" height="16" viewBox="0 0 14 16"><g fill="none" stroke="#2574C2" stroke-width="1" stroke-linejoin="round"><path d="M0.6,0.6 H10.6 L12.4,2.2 V15.2 H2.2 L0.6,13.6 Z"/><path d="M2.2,15.2 V13.6 H0.6" opacity="0.6"/><path d="M12.4,2.2 V15.2" stroke-width="1.6" opacity="0.55"/><path d="M3.4,9.4 L5.6,7 L7,8.2 L9.4,5.4 M7.8,5.4 H9.4 V7"/></g></svg>
<div class="a" style="left:1210.8px;top:634.8px;width:164.5px;height:1px;background:#EFEFEF;border-radius:0px;"></div>
<span class="t" style="left:1245.40px;top:648.03px;font-size:10.0px;color:#2a2a2a;font-weight:400;transform:scaleX(0.9806);">EBITDA</span>
<svg class="a" style="left:1222px;top:643.6px;" width="17" height="16" viewBox="0 0 17 16"><g fill="none" stroke="#2FA86A" stroke-width="1" opacity="0.9"><rect x="0.6" y="6.2" width="3.6" height="8.6"/><rect x="5.8" y="9.2" width="3.6" height="5.6"/><rect x="11.2" y="0.6" width="3.8" height="14.2"/></g></svg>
<div class="a" style="left:1210.8px;top:666.8px;width:164.5px;height:1px;background:#EFEFEF;border-radius:0px;"></div>
<span class="t" style="left:1245.44px;top:680.03px;font-size:10.0px;color:#2a2a2a;font-weight:400;transform:scaleX(0.9291);">PARCEIRO COMERCIAL</span>
<svg class="a" style="left:1222px;top:675.2px;" width="18" height="16" viewBox="0 0 18 16"><g fill="none" stroke="#F0B13A" stroke-width="1" stroke-linejoin="round"><path d="M8.6,14.4 L2.2,8.4 C0.5,6.7 0.5,3.8 2.4,2.2 C4.3,0.7 6.9,1 8.6,3 C10.3,1 12.9,0.7 14.8,2.2 C16.7,3.8 16.7,6.7 15,8.4 Z"/><path d="M4,8.2 L7.2,5.2 L10,6.4 L12.8,8.9 M5.6,10 L7.6,11.8 M7.4,8.9 L9.4,10.7 M9.1,7.6 L11.1,9.4"/></g></svg>
<div class="a" style="left:1210.8px;top:698.8px;width:164.5px;height:1px;background:#EFEFEF;border-radius:0px;"></div>
<span class="t" style="left:1245.40px;top:712.03px;font-size:10.0px;color:#2a2a2a;font-weight:400;transform:scaleX(0.9727);">FIADOR</span>
<svg class="a" style="left:1223px;top:708.6px;" width="17" height="16" viewBox="0 0 17 16"><g fill="none" stroke="#D9534F" stroke-width="1" stroke-linejoin="round"><path d="M6,0.8 C7.8,0.8 8.8,2.2 8.8,4.2 C8.8,6.4 7.8,8.2 6,8.2 C4.2,8.2 3.2,6.4 3.2,4.2 C3.2,2.2 4.2,0.8 6,0.8 Z"/><path d="M0.8,14 C1.2,11 2.8,9.6 4.8,9.2 M0.8,14 H8.4"/><path d="M11.4,8.6 L14.8,9.8 C14.8,12.4 13.6,14 11.4,15 C9.2,14 8,12.4 8,9.8 Z"/></g><path d="M9.9,11.8 L11,12.9 L13,10.9" fill="none" stroke="#D9534F" stroke-width="0.85"/></svg>
<div class="a" style="left:1210.8px;top:730.8px;width:164.5px;height:1px;background:#EFEFEF;border-radius:0px;"></div>
<span class="t" style="left:1245.43px;top:744.03px;font-size:10.0px;color:#2a2a2a;font-weight:400;transform:scaleX(0.9392);">RESUMO GERAL</span>
<svg class="a" style="left:1224px;top:740.2px;" width="13" height="17" viewBox="0 0 13 17"><g fill="none" stroke="#2FA86A" stroke-width="1" stroke-linejoin="round"><path d="M0.6,0.6 H8 L12,4.6 V15.6 H0.6 Z"/><path d="M8,0.6 V4.6 H12"/></g><path d="M7.80,8.24 C7.05,7.07 4.80,7.33 4.80,8.63 C4.80,9.67 7.80,9.80 7.80,10.97 C7.80,12.27 5.55,12.53 4.80,11.36 M6.30,6.55 V7.41 M6.30,12.19 V13.05" fill="none" stroke="#2FA86A" stroke-width="0.9"/></svg>
<div class="a" style="left:1210.8px;top:762.8px;width:164.5px;height:1px;background:#EFEFEF;border-radius:0px;"></div>
<span class="t" style="left:1245.36px;top:776.03px;font-size:10.0px;color:#2a2a2a;font-weight:400;transform:scaleX(0.9123);">IMPRIMIR</span>
<svg class="a" style="left:1222.2px;top:771.8px;" width="17" height="16" viewBox="0 0 17 16"><g fill="none" stroke="#4A90D9" stroke-width="1.1" stroke-linejoin="round" opacity="0.9"><rect x="4" y="0.7" width="8.6" height="3.9" rx="0.8"/><path d="M3.6,11.4 H1.8 C1.1,11.4 0.7,11 0.7,10.2 V5.9 C0.7,5.1 1.2,4.6 2,4.6 H14.6 C15.4,4.6 15.9,5.1 15.9,5.9 V10.2 C15.9,11 15.5,11.4 14.8,11.4 H13"/><rect x="3.8" y="8.8" width="9" height="6.4" rx="0.8" fill="#DCEAF8"/></g><path d="M5.8,11.4 H10.8 M5.8,13 H10.8" stroke="#4A90D9" stroke-width="0.9"/></svg>
<div class="a" style="left:1210.8px;top:794.8px;width:164.5px;height:1px;background:#EFEFEF;border-radius:0px;"></div>
<span class="t" style="left:1245.45px;top:808.03px;font-size:10.0px;color:#2a2a2a;font-weight:400;transform:scaleX(0.9141);">HISTÓRICO</span>
<svg class="a" style="left:1224px;top:804.4px;" width="15" height="16" viewBox="0 0 15 16"><g fill="none" stroke="#555" stroke-width="0.95"><path d="M0.6,0.6 H11.2 V9.6"/><path d="M0.6,0.6 V14.6 H8"/><path d="M2.8,3 H9 M2.8,5.8 H9 M2.8,8.2 H7.4 M2.8,10.4 H6.8"/></g><rect x="9" y="10" width="4.8" height="5.2" fill="#fff" stroke="#444" stroke-width="0.95"/><path d="M10.2,11.3 L12.6,14 M12.6,11.3 L10.2,14" stroke="#444" stroke-width="0.8"/></svg>
<div class="a" style="left:1210.8px;top:826.8px;width:164.5px;height:1px;background:#EFEFEF;border-radius:0px;"></div>
<span class="t" style="left:1245.42px;top:840.03px;font-size:10.0px;color:#2a2a2a;font-weight:400;transform:scaleX(0.9531);">EXCLUIR</span>
<svg class="a" style="left:1224px;top:835.7px;" width="13" height="17" viewBox="0 0 13 17"><path d="M0.3,2.4 H12.1" stroke="#D9473D" stroke-width="1.2"/><path d="M4.1,2.4 C4.1,0.5 7.9,0.5 7.9,2.4" fill="none" stroke="#D46A62" stroke-width="1"/><path d="M1.4,2.6 V14.3 C1.4,15 1.9,15.4 2.6,15.4 H9.4 C10.1,15.4 10.6,15 10.6,14.3 V2.6" fill="none" stroke="#C9615A" stroke-width="1.1"/><rect x="3.6" y="4.5" width="4.8" height="8.3" fill="#D7A29F"/><path d="M4.5,4.5 V12.8 M5.6,4.5 V12.8 M6.5,4.5 V12.8 M7.5,4.5 V12.8" stroke="#C4726C" stroke-width="0.45"/></svg>
<svg class="a" style="left:17px;top:141.8px;" width="22" height="22" viewBox="0 0 22 22"><g fill="none" stroke="#5a5a5a" stroke-width="0.9" stroke-linejoin="round"><path d="M6.15,8.72 L6.48,6.90 L8.72,6.90 L9.05,8.72 L9.48,8.87 L9.89,9.07 L11.41,8.01 L12.99,9.59 L11.93,11.11 L12.13,11.52 L12.28,11.95 L14.10,12.28 L14.10,14.52 L12.28,14.85 L12.13,15.28 L11.93,15.69 L12.99,17.21 L11.41,18.79 L9.89,17.73 L9.48,17.93 L9.05,18.08 L8.72,19.90 L6.48,19.90 L6.15,18.08 L5.72,17.93 L5.31,17.73 L3.79,18.79 L2.21,17.21 L3.27,15.69 L3.07,15.28 L2.92,14.85 L1.10,14.52 L1.10,12.28 L2.92,11.95 L3.07,11.52 L3.27,11.11 L2.21,9.59 L3.79,8.01 L5.31,9.07 L5.72,8.87Z"/><circle cx="7.6" cy="13.4" r="2.2"/><path d="M15.23,2.32 L15.75,1.00 L17.41,1.34 L17.37,2.75 L17.67,2.93 L17.94,3.14 L19.24,2.57 L20.17,3.98 L19.15,4.96 L19.23,5.29 L19.28,5.63 L20.60,6.15 L20.26,7.81 L18.85,7.77 L18.67,8.07 L18.46,8.34 L19.03,9.64 L17.62,10.57 L16.64,9.55 L16.31,9.63 L15.97,9.68 L15.45,11.00 L13.79,10.66 L13.83,9.25 L13.53,9.07 L13.26,8.86 L11.96,9.43 L11.03,8.02 L12.05,7.04 L11.97,6.71 L11.92,6.37 L10.60,5.85 L10.94,4.19 L12.35,4.23 L12.53,3.93 L12.74,3.66 L12.17,2.36 L13.58,1.43 L14.56,2.45 L14.89,2.37Z"/><circle cx="15.6" cy="6.0" r="1.7"/></g></svg>
<svg class="a" style="left:17.0px;top:185.0px;" width="22" height="22" viewBox="0 0 22 22"><g fill="none" stroke="#F2B543" stroke-width="1.05" stroke-linejoin="round"><path d="M5,2 H17 V4.3 H5 Z"/><path d="M4,6.7 V4.3 H18 V6.7"/><path d="M3,12.7 V6.7 H19 V12.7" opacity="0.8"/><path d="M2,12.7 H8 C8.6,14.8 9.6,15.6 11,15.6 C12.4,15.6 13.4,14.8 14,12.7 H20 V19.6 H2 Z"/></g></svg>
<svg class="a" style="left:17.0px;top:229.0px;" width="22" height="22" viewBox="0 0 22 22"><g fill="none" stroke="#33A86B"><path d="M1,13.7 L6.3,8.7 L8.3,10.3 L13,5.7 L14.7,7 L20.3,1.2 M16.4,1 H20.6 V5.2" stroke-width="1.1" stroke-linejoin="round"/><path d="M3.2,14.0 V20.5 M7.6,12.1 V20.5 M12.0,9.1 V20.5 M16.4,7.6 V20.5 M20.6,3.6 V20.5" stroke-width="1"/><path d="M5.4,11.9 V20.5 M9.8,11.2 V20.5 M14.2,9.0 V20.5 M18.6,5.4 V20.5" stroke-width="1.4" opacity="0.4"/></g></svg>
<svg class="a" style="left:17.0px;top:273.0px;" width="22" height="22" viewBox="0 0 22 22"><g fill="none" stroke="#2F79C6" stroke-width="1.1"><ellipse cx="11" cy="11" rx="9.2" ry="3.6"/><ellipse cx="11" cy="11" rx="9.2" ry="3.6" transform="rotate(60 11 11)"/><ellipse cx="11" cy="11" rx="9.2" ry="3.6" transform="rotate(120 11 11)"/><circle cx="11" cy="11" r="2.4"/><circle cx="11" cy="11" r="0.9" fill="#2F79C6"/></g></svg>
<svg class="a" style="left:17.0px;top:317.0px;" width="22" height="22" viewBox="0 0 22 22"><g fill="none" stroke="#33A86B" stroke-width="1.1"><rect x="1.6" y="4" width="18.8" height="14.2" rx="1.2"/><rect x="8" y="1.2" width="6" height="2.8" rx="0.6"/><line x1="1.6" y1="11.2" x2="20.4" y2="11.2"/></g><rect x="10.2" y="8.6" width="1.6" height="1" fill="#33A86B"/></svg>
<svg class="a" style="left:17px;top:361px;" width="22" height="22" viewBox="0 0 22 22"><g fill="none" stroke="#F2B543" stroke-width="1" stroke-linejoin="round"><path d="M4.4,4.4 V3.2 H15.8 V10.8"/><rect x="3.2" y="4.4" width="2.5" height="9.4" rx="1.25"/><rect x="7.1" y="4.4" width="2.5" height="9.4" rx="1.25"/><rect x="11.1" y="4.4" width="2.5" height="9.4" rx="1.25"/><path d="M2.8,8.4 H14"/><path d="M1.2,15.6 C2.2,13.6 4.2,13.6 5.2,15.6 C6.2,13.6 8.2,13.6 9.2,15.6 C10.2,13.6 12.2,13.6 13.2,15.6"/><path d="M1.2,15.6 C2.2,17.2 4.2,17.2 5.2,15.6 C6.2,17.2 8.2,17.2 9.2,15.6 C10.2,17.2 12.2,17.2 13.2,15.6"/><path d="M4,17 V18.8 M6.6,17 V18.8 M9.2,17 V18.8 M11.8,17 V18.8"/><path d="M14.2,18.8 V11.2 H21 V18.8"/><path d="M17.4,11 V3.8 H19 V11" opacity="0.6"/><path d="M14.8,12.8 H20.4" opacity="0.5"/><path d="M1,18.8 H21" stroke-width="1.2"/></g></svg>
<svg class="a" style="left:17px;top:405px;" width="22" height="22" viewBox="0 0 22 22"><g fill="none" stroke="#33A86B" stroke-width="1.05" stroke-linejoin="round"><path d="M3.5,3.4 H6.4 A1.6,1.6 0 0,1 9.6,3.4 H21.1 V13.2 A1.6,1.6 0 0,0 21.1,16.4 V18.5 H17.6 A1.6,1.6 0 0,1 14.4,18.5 H9.6 A1.6,1.6 0 0,0 6.4,18.5 H3.5 V9 A1.6,1.6 0 0,1 3.5,5.8 Z"/><path d="M12.6,3.4 V5.8 A1.6,1.6 0 0,0 12.6,9 V13.2 A1.6,1.6 0 0,1 12.6,16.4 V18.5"/><path d="M3.5,11 H6.4 A1.6,1.6 0 0,0 9.6,11 H14.4 A1.6,1.6 0 0,1 17.6,11 H21.1"/></g></svg>
<svg class="a" style="left:17.0px;top:449.0px;" width="22" height="22" viewBox="0 0 22 22"><g fill="none" stroke="#2F79C6" stroke-width="1.15" stroke-linejoin="round"><path d="M2.6,7.2 H15 V18.6 H2.6 Z" opacity="0.75"/><path d="M15,18.6 L19.4,14 V9.8"/><path d="M1.4,9.6 C2.2,6.6 4.6,4.6 8.2,3.8 L9.4,3 L12,4.8 L13.6,7.2 M8.6,4 C7.6,5 7,6 6.8,7.2"/><path d="M12.4,3.6 L15.2,2.2 L20.8,7.2 L18.6,10 C17.2,8.6 15,6.2 13.2,4.4"/><path d="M6.6,10.6 H10.8"/></g></svg>
<svg class="a" style="left:17px;top:493px;" width="22" height="22" viewBox="0 0 22 22"><g fill="none" stroke="#5a5a5a" stroke-width="0.95" stroke-linejoin="round"><path d="M1.4,20.4 V14.6 L3.4,10.6 H7.6 M1.6,14.6 H5 L5.8,10.8"/><path d="M7.6,17.4 V4.4 L9.8,3.8 V17.4"/><path d="M9.8,4.6 L12.4,3.6 L13.6,2.4 L16.6,6.6 L18.4,6.6 L19.8,5.6 L20.8,11.4 L19.4,13.4 L19.6,15.2"/><path d="M9.8,15.4 L21.4,17.2 V19.2 M1.6,17.6 H19.6 V20"/><circle cx="4.6" cy="20.4" r="1.6"/><circle cx="9.8" cy="20.4" r="1.6"/><circle cx="14" cy="20.4" r="1.6"/></g></svg>
<svg class="a" style="left:17.0px;top:538.0px;" width="22" height="22" viewBox="0 0 22 22"><g fill="none" stroke="#F2B543" stroke-width="1"><path d="M1.2,3.4 L3,5.6 L6,1.4 M1.2,10.2 L3,12.4 L6,8.2 M1.2,17.4 L3,19.6 L6,15.4"/><path d="M8.8,3.2 H20.6 M8.8,10.2 H20.6" stroke-width="1.1"/><path d="M8.8,17.6 H20.6" stroke-width="0.9"/></g></svg>
<svg class="a" style="left:17.0px;top:581.0px;" width="22" height="22" viewBox="0 0 22 22"><g fill="none" stroke="#F2B543" stroke-width="1.1" stroke-linejoin="round"><path d="M1,1.8 C3.2,1.2 4.4,2 4.8,3.6 L7.4,16 H17"/><path d="M5.6,7.2 H20 L18.2,13.6 H7.2"/><circle cx="8.6" cy="18.8" r="1.3"/><circle cx="15.6" cy="18.8" r="1.3"/></g></svg>
<svg class="a" style="left:17.0px;top:625.0px;" width="22" height="22" viewBox="0 0 22 22"><g fill="none" stroke="#E0574F" stroke-width="1.1"><path d="M19.6,7.2 A9,9 0 1,0 19.6,14.8"/><path d="M20.8,11 H6.2 M10.2,7 L6.2,11 L10.2,15" /></g></svg>
<svg class="a" style="left:17.0px;top:669.0px;" width="22" height="22" viewBox="0 0 22 22"><g fill="none" stroke="#33A86B" stroke-width="1.1"><path d="M2.4,7.2 A9,9 0 1,1 2.4,14.8"/><path d="M1.2,11 H15.8 M11.8,7 L15.8,11 L11.8,15"/></g></svg>
<svg class="a" style="left:17px;top:713px;" width="22" height="22" viewBox="0 0 22 22"><path d="M6.10,6.94 C5.15,5.54 2.30,5.86 2.30,7.41 C2.30,8.65 6.10,8.80 6.10,10.20 C6.10,11.75 3.25,12.06 2.30,10.66 M4.20,4.93 V5.95 M4.20,11.65 V12.68 M12.60,6.94 C11.60,5.54 8.60,5.86 8.60,7.41 C8.60,8.65 12.60,8.80 12.60,10.20 C12.60,11.75 9.60,12.06 8.60,10.66 M10.60,4.93 V5.95 M10.60,11.65 V12.68 M19.70,5.88 C18.55,4.21 15.10,4.58 15.10,6.43 C15.10,7.92 19.70,8.10 19.70,9.77 C19.70,11.62 16.25,11.98 15.10,10.32 M17.40,3.47 V4.70 M17.40,11.50 V12.72" fill="none" stroke="#E0574F" stroke-width="1.05"/><path d="M2,17 H18" stroke="#E0574F" stroke-width="1.3" opacity="0.45"/><circle cx="2.6" cy="17" r="0.9" fill="#E0574F"/><circle cx="7.6" cy="17" r="0.9" fill="#E0574F"/><circle cx="12.6" cy="17" r="0.9" fill="#E0574F"/><path d="M17.2,14.6 L21.8,17 L17.2,19.4 Z" fill="#E0574F" opacity="0.85"/></svg>
<svg class="a" style="left:17.0px;top:757.0px;" width="22" height="22" viewBox="0 0 22 22"><g fill="none" stroke="#2F79C6" stroke-width="1.1"><rect x="3.4" y="2.4" width="15.2" height="17.2"/><path d="M2.2,19.6 H19.8" stroke-width="1.4"/><path d="M6,5.6 H12.6 M6,8.4 H12.6 M6,11.2 H12.6 M6,14 H12.6 M14.2,5.6 H16 M14.2,8.4 H16 M14.2,11.2 H16 M13.2,16.8 H16"/></g></svg>
<svg class="a" style="left:17.0px;top:801.0px;" width="22" height="22" viewBox="0 0 22 22"><g fill="none" stroke="#F2B543" stroke-width="1.1"><path d="M1.6,8 H7.2 M14.6,8 H20.4 M17.6,5 L20.4,8 L17.6,11 M1.6,14.6 H7 M14.8,14.6 H20.4 M4.4,11.6 L1.6,14.6 L4.4,17.6"/><path d="M13.6,5.6 C12.8,3.6 8.4,3.6 8.4,6.6 C8.4,9.6 13.8,9.2 13.8,12.6 C13.8,16 9,16 8.2,13.8 M11,2.6 V4 M11,15.4 V17"/></g></svg>
<svg class="a" style="left:17px;top:845px;" width="22" height="22" viewBox="0 0 22 22"><g fill="none" stroke="#5a5a5a" stroke-width="0.95" stroke-linejoin="round"><path d="M3.2,3.4 H9.4 C10.4,3.4 11,3.9 11,4.6 C11,3.9 11.6,3.4 12.6,3.4 H18.8 V16.6 H12.4 C11.6,16.6 11,17 11,17.4 C11,17 10.4,16.6 9.6,16.6 H3.2 Z"/><path d="M11,4.6 V16.8" opacity="0.45" stroke-width="1.4"/><path d="M1.2,18.2 V6.8 L3.2,5 M20.8,18.2 V6.8 L18.8,5 M1.2,18.2 H8.4 C9.6,18.2 10.2,19 11,19 C11.8,19 12.4,18.2 13.6,18.2 H20.8"/><path d="M2.3,7.2 V17.2 M19.7,7.2 V17.2" opacity="0.45"/></g><path d="M17.00,8.74 C16.20,7.34 13.80,7.65 13.80,9.21 C13.80,10.45 17.00,10.60 17.00,11.99 C17.00,13.54 14.60,13.86 13.80,12.46 M15.40,6.72 V7.75 M15.40,13.45 V14.47" fill="none" stroke="#5a5a5a" stroke-width="1"/></svg>
<svg class="a" style="left:17px;top:889px;" width="22" height="22" viewBox="0 0 22 22"><g fill="none" stroke="#2F79C6" stroke-width="1.05" stroke-linejoin="round"><path d="M3.4,7.4 V2.2 C3.4,1.4 3.8,1 4.6,1 H17.4 C18.2,1 18.6,1.4 18.6,2.2 V7.4"/><path d="M5,5.6 C5,4.6 5.6,4.2 6.6,4.2 H15.4 C16.4,4.2 17,4.6 17,5.6 V8.6 C17,9.4 16.4,10 15.6,10 H6.4 C5.6,10 5,9.4 5,8.6 Z"/><rect x="1.4" y="5.2" width="1.9" height="3.6" opacity="0.8"/><rect x="18.7" y="5.2" width="1.9" height="3.6" opacity="0.8"/><path d="M2.4,16.2 V11.6 C2.6,10.8 3.4,10.4 4.6,10.4 H17.4 C18.6,10.4 19.4,10.8 19.6,11.6 V16.2"/><path d="M7.6,10.6 V13.8 H14.4 V10.6" opacity="0.7"/><path d="M3.8,12.4 H6.2 V14 M15.8,14 V12.4 H18.2"/><path d="M2.4,16.2 H19.6 V18 H2.4 Z"/><path d="M2.8,18 V20.4 C2.8,20.8 3,21 3.4,21 H5.8 V18 M16.2,18 V21 H18.6 C19,21 19.2,20.8 19.2,20.4 V18"/></g></svg>
<svg class="a" style="left:1195px;top:25px;" width="28" height="25" viewBox="0 0 28 25"><g fill="none" stroke="#fff" stroke-width="1.15" stroke-linecap="round" stroke-linejoin="round"><path d="M10.8,17 H6.2 C3.8,17 2,15.2 2,12.8 C2,10.6 3.6,8.8 5.8,8.6 C6.2,7.6 7.2,6.8 8.6,7 C9.6,4.2 11.8,2.2 15.2,2.2 C18.6,2.2 21,4.6 21.4,7.6 C23.8,8.2 25.6,10.2 25.6,12.6 C25.6,15.2 23.8,17 21.4,17 H17.4"/><path d="M14.1,11.4 V22.6 M11.5,20 L14.1,22.6 L16.7,20" stroke-opacity="0.9"/></g></svg>
<svg class="a" style="left:1232px;top:26px;" width="26" height="22" viewBox="0 0 26 22"><g fill="none" stroke="#fff" stroke-width="1.1" stroke-linecap="round" stroke-linejoin="round"><path d="M6.2,17.6 C7.6,16 7.8,14 7.8,10.4 C7.8,6.6 9.8,4.6 13,4.6 C16.2,4.6 18.2,6.6 18.2,10.4 C18.2,14 18.4,16 19.8,17.6 Z"/><path d="M12,4.5 C12,3.2 14,3.2 14,4.5"/><path d="M11.6,17.8 C11.6,19.6 14.4,19.6 14.4,17.8"/><path d="M4.6,5.4 C3.4,8 3.4,11.8 4.6,14.4 M2.2,4.4 C0.8,7.6 0.8,12.2 2.2,15.4 M21.4,5.4 C22.6,8 22.6,11.8 21.4,14.4 M23.8,4.4 C25.2,7.6 25.2,12.2 23.8,15.4"/></g></svg>
<svg class="a" style="left:1281px;top:21px;" width="32" height="32" viewBox="0 0 32 32"><circle cx="16" cy="16" r="14.3" fill="none" stroke="#fff" stroke-width="1.7"/><path d="M5.4,25.6 C7,22.6 9.6,21.8 12.2,20.8 L12.6,18.6 C11.2,17.4 10.4,15.4 10.2,13.6 C9.6,13.4 9.4,12.4 9.8,11.6 C9.6,7.6 11.8,5.2 16,5.2 C20.2,5.2 22.4,7.6 22.2,11.6 C22.6,12.4 22.4,13.4 21.8,13.6 C21.6,15.4 20.8,17.4 19.4,18.6 L19.8,20.8 C22.4,21.8 25,22.6 26.6,25.6 C24,28.6 20.2,30.3 16,30.3 C11.8,30.3 8,28.6 5.4,25.6 Z" fill="#fff"/></svg>
<svg class="a" style="left:111px;top:111px;" width="20" height="16" viewBox="0 0 20 16"><g fill="none" stroke="#6a6a6a" stroke-width="0.95" stroke-linejoin="round"><path d="M1.2,13.6 H18.8" stroke-width="1.1"/><path d="M3.3,13.6 V4.2 C3.3,3.2 5.8,3.2 5.8,4.2 V13.6"/><path d="M3.3,6.4 H5.8 M3.3,8.8 H5.8"/><path d="M4,3.6 L4.4,1.6 H7.4 C7.9,1.6 8.2,1.9 8.2,2.4 V6.8"/><path d="M5.8,7.1 H17.4 V13.6"/><path d="M3.3,8.4 C1.8,8.6 1.8,11.4 3.3,11.6 M4.2,11.8 V13.6"/><path d="M7.2,11.8 H15.8" opacity="0.5"/></g><rect x="15" y="2" width="1.7" height="5" fill="#777"/><g fill="#6a6a6a"><circle cx="7.4" cy="10.2" r="0.75"/><circle cx="9.6" cy="10.2" r="0.75"/><circle cx="11.6" cy="10.2" r="0.75"/><circle cx="13.8" cy="10.2" r="0.75"/></g></svg>
<svg class="a" style="left:222.5px;top:113px;" width="11" height="11" viewBox="0 0 11 11"><rect x="0.5" y="0.5" width="10" height="10" fill="none" stroke="#999" stroke-width="0.9"/><path d="M3,3 L8,8 M8,3 L3,8" stroke="#999" stroke-width="0.9"/></svg>
<svg class="a" style="left:238.5px;top:115px;" width="11" height="7" viewBox="0 0 11 7"><path d="M0.6,0.6 L5.5,5.6 L10.4,0.6" fill="none" stroke="#666" stroke-width="1"/></svg>
<svg class="a" style="left:295px;top:110px;" width="16" height="16" viewBox="0 0 16 16"><g fill="none" stroke="#999" stroke-width="0.9"><rect x="0.5" y="2" width="15" height="13.5" rx="1"/><path d="M0.5,5 H15.5"/><path d="M4,0.4 V3.6 M12,0.4 V3.6"/></g><g fill="#999"><rect x="3" y="7" width="10" height="6.6" opacity="0.35"/></g><path d="M3,8.6 H13 M3,10.4 H13 M3,12.2 H13 M5,7 V13.6 M7,7 V13.6 M9,7 V13.6 M11,7 V13.6" stroke="#888" stroke-width="0.5"/></svg>
<svg class="a" style="left:395px;top:113px;" width="16" height="11" viewBox="0 0 16 11"><path d="M0.5,5.4 H9" stroke="#555" stroke-width="1.8"/><path d="M8.4,0.8 L15.6,5.4 L8.4,10 Z" fill="#555"/></svg>
<svg class="a" style="left:717px;top:109px;" width="20" height="20" viewBox="0 0 20 20"><circle cx="7.8" cy="8" r="6.6" fill="none" stroke="#444" stroke-width="0.95"/><path d="M12.6,12.8 L18.2,18.4" stroke="#444" stroke-width="1.4" stroke-linecap="round"/></svg>
<svg class="a" style="left:761.5px;top:106.5px;" width="23" height="23" viewBox="0 0 23 23"><path d="M0.6,0.8 H22 L14.2,9 H8.4 Z" fill="#1A70B8"/><path d="M8.4,10.4 H14.2 V22.6 L8.4,19 Z" fill="#1A70B8"/><path d="M0.6,0.8 H22 V2.4 H0.6 Z" fill="#1A70B8"/></svg>
<svg class="a" style="left:1156px;top:111.5px;" width="14" height="14" viewBox="0 0 14 14"><path d="M7,0.5 V13.5 M0.5,7 H13.5" stroke="#fff" stroke-width="1.2"/></svg>
<svg class="a" style="left:1281.5px;top:111.5px;" width="15" height="14" viewBox="0 0 15 14"><g fill="none" stroke="#EFE3C0" stroke-width="0.85" stroke-linejoin="round"><path d="M2.8,0.6 H12.2 V2.4 M2.2,2.4 H12.8 V5.2 M1.8,5.2 H13.2"/><path d="M2.2,2.4 V5.2"/><path d="M0.6,5.6 H4.6 L6,7.6 H9 L10.4,5.6 H14.4 V13.4 H0.6 Z"/></g></svg>
<svg class="a" style="left:1382.5px;top:116px;" width="7" height="5" viewBox="0 0 7 5"><path d="M0.5,0.6 L3.5,3.6 L6.5,0.6" fill="none" stroke="#FCE2A8" stroke-width="0.9"/></svg>
<svg class="a" style="left:1302px;top:183px;" width="16" height="16" viewBox="0 0 16 16"><path d="M1.6,14.4 L2.4,11.4 L12.4,1.4 C13,0.8 13.8,0.8 14.4,1.4 C15,2 15,2.8 14.4,3.4 L4.4,13.4 Z" fill="none" stroke="#333" stroke-width="1.1" stroke-linejoin="round"/><path d="M11.4,2.4 L13.4,4.4" stroke="#333" stroke-width="1.1"/><path d="M0.8,15.2 L1.6,12.4 L3.6,14.4 Z" fill="#333"/><path d="M12.6,1.2 L14.8,3.4 L15.4,2.6 L13.4,0.6 Z" fill="#333"/></svg>
</body></html>
